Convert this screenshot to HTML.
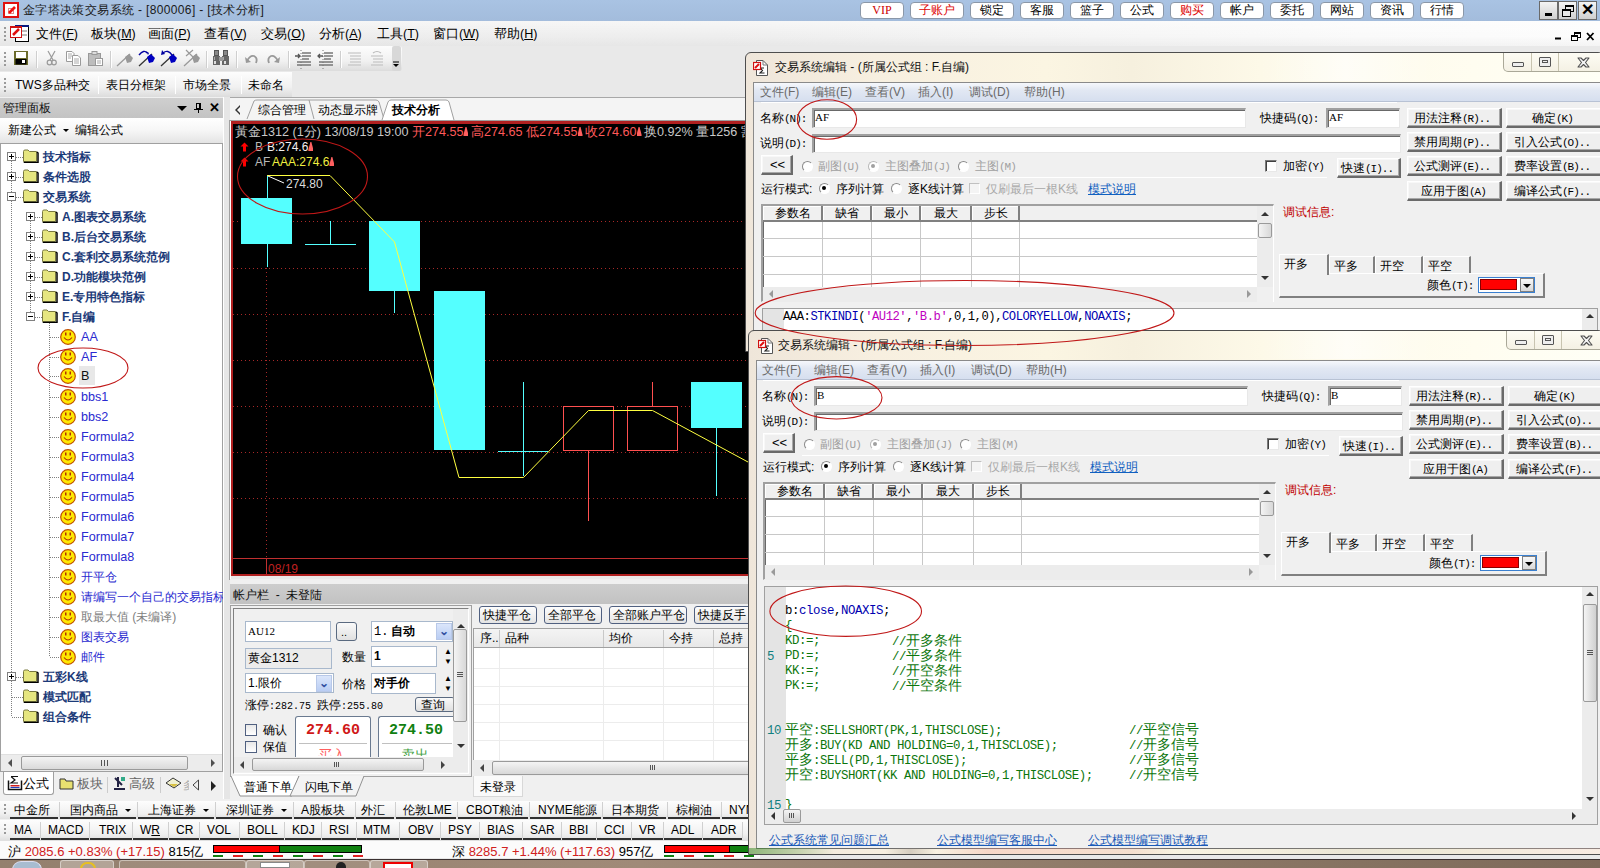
<!DOCTYPE html>
<html><head><meta charset="utf-8">
<style>
*{box-sizing:border-box}
body{margin:0;width:1600px;height:868px;overflow:hidden;position:relative;background:#e9e9e9;font-family:"Liberation Sans",sans-serif;font-size:12px;color:#000}
.a{position:absolute}
.t{position:absolute;white-space:nowrap;line-height:14px}
#title{left:0;top:0;width:1600px;height:21px;background:linear-gradient(#a9c3e3,#a3bcdc)}
.tb{position:absolute;top:2px;height:17px;background:#fff;border:1px solid #8a97a8;border-radius:4px;text-align:center;line-height:15px;font-size:12px}
.wc{position:absolute;top:1px;height:19px;width:19px;background:linear-gradient(#f4f4f4,#cfcfcf);border:1px solid #6a6a6a}
#menu{left:0;top:21px;width:1600px;height:25px;background:linear-gradient(rgba(255,255,255,.5),rgba(255,255,255,0) 60%,rgba(0,0,0,.03)),linear-gradient(90deg,#ededed,#eeeeee 45%,#fafafa 85%,#fcfcfc)}
.mi{position:absolute;top:5px;font-size:12.5px;white-space:nowrap}
#tool{left:0;top:46px;width:402px;height:25px;background:linear-gradient(#fdfdfd,#f1f1f1 60%,#dcdcdc);border-radius:0 3px 3px 0}
#tool2{left:0;top:72px;width:292px;height:25px;background:linear-gradient(#fdfdfd,#f1f1f1 60%,#dcdcdc)}
.grip{position:absolute;left:4px;top:6px;width:2px;height:14px;background:repeating-linear-gradient(#9a9a9a 0 2px,transparent 2px 4px)}
.sep{position:absolute;top:4px;width:1px;height:18px;background:#c8c8c8;border-right:1px solid #fff}
.bell{display:inline-block;width:5px;height:9px;margin-left:0;margin-right:-1px;vertical-align:0px;background:linear-gradient(#ff6060,#ff6060);clip-path:polygon(40% 0,60% 0,100% 85%,100% 100%,0 100%,0 85%)}
</style></head><body>

<!-- TITLE BAR -->
<div id="title" class="a">
  <svg class="a" style="left:3px;top:2px" width="17" height="17"><rect x="1" y="1" width="14" height="14" fill="#fff" stroke="#e01010" stroke-width="2"/><rect x="5.5" y="6.5" width="5" height="5" fill="none" stroke="#d01010" stroke-dasharray="1,1"/><path d="M6 11 L12 5" stroke="#f01010" stroke-width="2.6"/></svg>
  <div class="t" style="left:23px;top:3px;font-size:12px;letter-spacing:0.36px;color:#1a1a1a">金字塔决策交易系统 - [800006] - [技术分析]</div>
  <div class="tb" style="left:860px;width:44px;color:#c00;font-family:'Liberation Serif',serif;font-size:12px">VIP</div>
  <div class="tb" style="left:910px;width:54px;color:#d00">子账户</div>
  <div class="tb" style="left:970px;width:44px">锁定</div>
  <div class="tb" style="left:1020px;width:44px">客服</div>
  <div class="tb" style="left:1070px;width:44px">篮子</div>
  <div class="tb" style="left:1120px;width:44px">公式</div>
  <div class="tb" style="left:1170px;width:44px;color:#d00">购买</div>
  <div class="tb" style="left:1220px;width:44px">帐户</div>
  <div class="tb" style="left:1270px;width:44px">委托</div>
  <div class="tb" style="left:1320px;width:44px">网站</div>
  <div class="tb" style="left:1370px;width:44px">资讯</div>
  <div class="tb" style="left:1420px;width:44px">行情</div>
  <div class="wc" style="left:1539px"><div class="a" style="left:5px;top:11px;width:7px;height:3px;background:#000"></div></div>
  <div class="wc" style="left:1558px"><div class="a" style="left:6px;top:3px;width:9px;height:7px;border:2px solid #000;border-width:2px 1px 1px 1px"></div><div class="a" style="left:3px;top:7px;width:9px;height:8px;border:1px solid #000;border-top-width:2px;background:#e8e8e8"></div></div>
  <div class="wc" style="left:1578px;font-weight:bold;font-size:16px;line-height:16px;text-align:center">✕</div>
</div>

<!-- MENU -->
<div id="menu" class="a">
  <div class="grip" style="top:6px"></div>
  <svg class="a" style="left:10px;top:4px" width="20" height="18"><rect x="5.5" y="0.5" width="13" height="16" fill="#fff" stroke="#000"/><rect x="5" y="0" width="14" height="2" fill="#0a1a80"/><rect x="12" y="5" width="5" height="2" fill="#bbb"/><rect x="12" y="9" width="5" height="2" fill="#bbb"/><rect x="0.5" y="1.5" width="11" height="11" fill="#fff" stroke="#d01010"/><rect x="0" y="1" width="12" height="2" fill="#d01010"/><path d="M3 10 L9 4" stroke="#e01010" stroke-width="2.5"/></svg>
  <div class="mi" style="left:36px">文件(<u>F</u>)</div>
  <div class="mi" style="left:91px">板块(<u>M</u>)</div>
  <div class="mi" style="left:148px">画面(<u>P</u>)</div>
  <div class="mi" style="left:204px">查看(<u>V</u>)</div>
  <div class="mi" style="left:261px">交易(<u>O</u>)</div>
  <div class="mi" style="left:319px">分析(<u>A</u>)</div>
  <div class="mi" style="left:377px">工具(<u>T</u>)</div>
  <div class="mi" style="left:433px">窗口(<u>W</u>)</div>
  <div class="mi" style="left:494px">帮助(<u>H</u>)</div>
</div>

<!-- TOOLBAR -->
<div id="tool" class="a">
  <div class="grip"></div>
</div>
<div id="tool2" class="a">
  <div class="grip"></div>
  <div class="t" style="left:15px;top:6px;font-size:12px">TWS多品种交</div>
  <div class="sep" style="left:98px"></div>
  <div class="t" style="left:106px;top:6px;font-size:12px">表日分框架</div>
  <div class="sep" style="left:175px"></div>
  <div class="t" style="left:183px;top:6px;font-size:12px">市场全景</div>
  <div class="sep" style="left:241px"></div>
  <div class="t" style="left:248px;top:6px;font-size:12px">未命名</div>
</div>


<!-- TOOLBAR ICONS -->
<svg class="a" style="left:0;top:44px" width="405" height="30">
<rect x="14" y="7" width="14" height="14" fill="#6b6b2b"/><rect x="16" y="8" width="10" height="6" fill="#fff"/><rect x="15.5" y="15" width="11" height="5.5" fill="#000"/><rect x="22" y="16" width="3" height="3" fill="#fff"/>
<line x1="36.5" y1="7" x2="36.5" y2="24" stroke="#cfcfcf"/><line x1="37.5" y1="7" x2="37.5" y2="24" stroke="#fff"/>
<line x1="110.5" y1="7" x2="110.5" y2="24" stroke="#cfcfcf"/><line x1="111.5" y1="7" x2="111.5" y2="24" stroke="#fff"/>
<line x1="206.5" y1="7" x2="206.5" y2="24" stroke="#cfcfcf"/><line x1="207.5" y1="7" x2="207.5" y2="24" stroke="#fff"/>
<line x1="236.5" y1="7" x2="236.5" y2="24" stroke="#cfcfcf"/><line x1="237.5" y1="7" x2="237.5" y2="24" stroke="#fff"/>
<line x1="288.5" y1="7" x2="288.5" y2="24" stroke="#cfcfcf"/><line x1="289.5" y1="7" x2="289.5" y2="24" stroke="#fff"/>
<line x1="340.5" y1="7" x2="340.5" y2="24" stroke="#cfcfcf"/><line x1="341.5" y1="7" x2="341.5" y2="24" stroke="#fff"/>
<path d="M48 7 L53 16 M55 7 L50 16" stroke="#9a9a9a" stroke-width="1.2" fill="none"/><circle cx="49.5" cy="18.5" r="2.3" fill="none" stroke="#9a9a9a" stroke-width="1.2"/><circle cx="54" cy="18.5" r="2.3" fill="none" stroke="#9a9a9a" stroke-width="1.2"/>
<path d="M66.5 7.5 L72 7.5 L74 9.5 L74 17.5 L66.5 17.5 Z" fill="#fff" stroke="#9a9a9a"/><path d="M72.5 11.5 L78 11.5 L80.5 14 L80.5 21.5 L72.5 21.5 Z" fill="#fff" stroke="#9a9a9a"/><path d="M74 15 L79 15 M74 17 L79 17 M74 19 L79 19 M68 10 L72 10 M68 12 L72 12 M68 14 L71 14" stroke="#aaa"/>
<rect x="88.5" y="9.5" width="12" height="12" fill="#bdbdbd" stroke="#999"/><rect x="92" y="7.5" width="5" height="3" fill="#ddd" stroke="#999"/><rect x="95.5" y="14.5" width="7" height="7" fill="#fff" stroke="#999"/><path d="M97 17 L101 17 M97 19 L101 19" stroke="#aaa"/>
<path d="M117 22 L130 10" stroke="#999" stroke-width="1.3"/><path d="M125 13 L129 10 L133 14 L131 18 L127 19 Z" fill="#999"/>
<path d="M139 22 L152 10" stroke="#333" stroke-width="1.3"/><path d="M147 13 L151 10 L155 14 L153 18 L149 19 Z" fill="#0000c0"/><path d="M139 11 Q144 5 147 9" stroke="#0000a0" stroke-width="1.4" fill="none"/><path d="M146 7 L148 11 L149 9 Z" fill="#0000a0"/>
<path d="M161 22 L174 10" stroke="#333" stroke-width="1.3"/><path d="M169 13 L173 10 L177 14 L175 18 L171 19 Z" fill="#0000c0"/><path d="M163 9 Q168 5 172 11" stroke="#0000a0" stroke-width="1.4" fill="none"/><path d="M162 6 L161 11 L165 10 Z" fill="#0000a0"/>
<path d="M184 22 L197 10" stroke="#999" stroke-width="1.3"/><path d="M192 13 L196 10 L200 14 L198 18 L194 19 Z" fill="#999"/><path d="M186 6 L193 13 M193 6 L186 12" stroke="#999" stroke-width="1.2"/>
<rect x="214.5" y="6.5" width="4" height="5" fill="#888" stroke="#555"/><rect x="223.5" y="6.5" width="4" height="5" fill="#888" stroke="#555"/><path d="M213 12 L220 12 L220 21 L213 21 Z M222 12 L229 12 L229 21 L222 21 Z" fill="#666"/><rect x="219" y="13" width="4" height="4" fill="#999"/><rect x="214" y="17" width="2" height="3" fill="#ddd"/><rect x="224" y="17" width="2" height="3" fill="#ddd"/><rect x="214" y="13" width="1" height="3" fill="#aaa"/><rect x="223" y="13" width="1" height="3" fill="#aaa"/>
<path d="M247 17 Q250 11 254 12 Q258 14 256 19" stroke="#999" stroke-width="1.8" fill="none"/><path d="M245 13 L246 19 L251 18 Z" fill="#999"/>
<path d="M278 17 Q275 11 271 12 Q267 14 269 19" stroke="#999" stroke-width="1.8" fill="none"/><path d="M280 13 L279 19 L274 18 Z" fill="#999"/>
<path d="M302 9 L311 9 M302 12 L311 12 M302 15 L309 15 M297 18 L311 18 M297 21 L311 21" stroke="#777" stroke-width="1.6"/>
<path d="M301 6 L301 25" stroke="#777" stroke-dasharray="1,2"/>
<path d="M295 12 L300 12 M298 10 L300 12 L298 14" stroke="#555" stroke-width="1.3" fill="none"/>
<path d="M324 9 L333 9 M324 12 L333 12 M324 15 L331 15 M319 18 L333 18 M319 21 L333 21" stroke="#777" stroke-width="1.6"/>
<path d="M323 6 L323 25" stroke="#777" stroke-dasharray="1,2"/>
<path d="M318 12 L323 12 M320 10 L318 12 L320 14" stroke="#555" stroke-width="1.3" fill="none"/>
<path d="M348 9 L361 9 M350 12 L361 12 M350 15 L361 15 M350 18 L361 18 M348 21 L361 21" stroke="#bbb" stroke-width="1.2"/>
<path d="M373 9 Q377 6 381 9 M371 12 L383 12 M373 15 L383 15 M373 18 L383 18 M371 21 L383 21" stroke="#bbb" stroke-width="1.2" fill="none"/>
<rect x="392" y="2" width="9" height="25" rx="2" fill="#d8d8d8"/><path d="M393 18 L399 18" stroke="#000"/><path d="M393 20 L399 20 L396 23 Z" fill="#000"/>
</svg>
<svg class="a" style="left:1550px;top:28px" width="50" height="16"><rect x="5" y="9.5" width="6" height="2" fill="#000"/><rect x="24.5" y="4.5" width="6" height="5" fill="none" stroke="#000"/><rect x="24" y="4" width="7" height="2" fill="#000"/><rect x="21.5" y="7.5" width="6" height="5" fill="#fafafa" stroke="#000"/><rect x="21" y="7" width="7" height="2" fill="#000"/><path d="M37 5 L43.5 12 M43.5 5 L37 12" stroke="#000" stroke-width="1.8"/></svg>
<!-- LEFT PANEL -->
<div class="a" style="left:0;top:97px;width:225px;height:676px;background:#f0f0f0"></div>
<div class="a" style="left:0;top:98px;width:225px;height:20px;background:linear-gradient(#cfcfcf,#c3c3c3)"></div>
<div class="t" style="left:3px;top:101px;font-size:12px;color:#111">管理面板</div>
<div class="a" style="left:177px;top:106px;width:0;height:0;border-left:5px solid transparent;border-right:5px solid transparent;border-top:5px solid #000"></div>
<div class="a" style="left:196px;top:103px;width:5px;height:6px;border:1px solid #000;border-right-width:2px"></div><div class="a" style="left:194px;top:109px;width:9px;height:1px;background:#000"></div><div class="a" style="left:198px;top:110px;width:1px;height:3px;background:#000"></div>
<div class="t" style="left:209px;top:101px;font-size:13px;font-weight:bold">✕</div>
<div class="a" style="left:0;top:118px;width:225px;height:25px;background:linear-gradient(#ffffff,#f6f6f6 50%,#e4e4e4)"></div>
<div class="t" style="left:8px;top:123px;font-size:12px">新建公式</div>
<div class="a" style="left:63px;top:129px;border-left:3px solid transparent;border-right:3px solid transparent;border-top:3px solid #000"></div>
<div class="t" style="left:75px;top:123px;font-size:12px">编辑公式</div>
<div class="a" style="left:0;top:143px;width:223px;height:630px;background:#fff;border:1px solid #a0a0a0;border-bottom:none;overflow:hidden"></div>
<div class="a" style="left:11px;top:157px;width:1px;height:560px;background:repeating-linear-gradient(#808080 0 1px,transparent 1px 2px)"></div>
<div class="a" style="left:30px;top:217px;width:1px;height:100px;background:repeating-linear-gradient(#808080 0 1px,transparent 1px 2px)"></div>
<div class="a" style="left:49px;top:317px;width:1px;height:340px;background:repeating-linear-gradient(#808080 0 1px,transparent 1px 2px)"></div>
<div class="a" style="left:7px;top:152px;width:9px;height:9px;border:1px solid #808080;background:#fff"></div><div class="a" style="left:9px;top:156px;width:5px;height:1px;background:#000"></div><div class="a" style="left:11px;top:154px;width:1px;height:5px;background:#000"></div>
<div class="a" style="left:16px;top:157px;width:7px;height:1px;background:repeating-linear-gradient(90deg,#808080 0 1px,transparent 1px 2px)"></div>
<svg class="a" style="left:23px;top:149px" width="16" height="14" viewBox="0 0 16 14"><path d="M0.5 2.5 Q0.5 1 2 1 L5 1 L6.5 2.5 L13.5 2.5 L13.5 12.5 L0.5 12.5 Z" fill="#e6e680" stroke="#7a7a40" stroke-width="1"/><path d="M14 3 L15 4 L15 13.5 L1.5 13.5 L1 13" fill="none" stroke="#000" stroke-width="1.5"/></svg>
<div class="t" style="left:43px;top:150px;font-size:12px;font-weight:bold;color:#1b3a78">技术指标</div>
<div class="a" style="left:7px;top:172px;width:9px;height:9px;border:1px solid #808080;background:#fff"></div><div class="a" style="left:9px;top:176px;width:5px;height:1px;background:#000"></div><div class="a" style="left:11px;top:174px;width:1px;height:5px;background:#000"></div>
<div class="a" style="left:16px;top:177px;width:7px;height:1px;background:repeating-linear-gradient(90deg,#808080 0 1px,transparent 1px 2px)"></div>
<svg class="a" style="left:23px;top:169px" width="16" height="14" viewBox="0 0 16 14"><path d="M0.5 2.5 Q0.5 1 2 1 L5 1 L6.5 2.5 L13.5 2.5 L13.5 12.5 L0.5 12.5 Z" fill="#e6e680" stroke="#7a7a40" stroke-width="1"/><path d="M14 3 L15 4 L15 13.5 L1.5 13.5 L1 13" fill="none" stroke="#000" stroke-width="1.5"/></svg>
<div class="t" style="left:43px;top:170px;font-size:12px;font-weight:bold;color:#1b3a78">条件选股</div>
<div class="a" style="left:7px;top:192px;width:9px;height:9px;border:1px solid #808080;background:#fff"></div><div class="a" style="left:9px;top:196px;width:5px;height:1px;background:#000"></div>
<div class="a" style="left:16px;top:197px;width:7px;height:1px;background:repeating-linear-gradient(90deg,#808080 0 1px,transparent 1px 2px)"></div>
<svg class="a" style="left:23px;top:189px" width="16" height="14" viewBox="0 0 16 14"><path d="M0.5 2.5 Q0.5 1 2 1 L5 1 L6.5 2.5 L13.5 2.5 L13.5 12.5 L0.5 12.5 Z" fill="#e6e680" stroke="#7a7a40" stroke-width="1"/><path d="M14 3 L15 4 L15 13.5 L1.5 13.5 L1 13" fill="none" stroke="#000" stroke-width="1.5"/></svg>
<div class="t" style="left:43px;top:190px;font-size:12px;font-weight:bold;color:#1b3a78">交易系统</div>
<div class="a" style="left:7px;top:672px;width:9px;height:9px;border:1px solid #808080;background:#fff"></div><div class="a" style="left:9px;top:676px;width:5px;height:1px;background:#000"></div><div class="a" style="left:11px;top:674px;width:1px;height:5px;background:#000"></div>
<div class="a" style="left:16px;top:677px;width:7px;height:1px;background:repeating-linear-gradient(90deg,#808080 0 1px,transparent 1px 2px)"></div>
<svg class="a" style="left:23px;top:669px" width="16" height="14" viewBox="0 0 16 14"><path d="M0.5 2.5 Q0.5 1 2 1 L5 1 L6.5 2.5 L13.5 2.5 L13.5 12.5 L0.5 12.5 Z" fill="#e6e680" stroke="#7a7a40" stroke-width="1"/><path d="M14 3 L15 4 L15 13.5 L1.5 13.5 L1 13" fill="none" stroke="#000" stroke-width="1.5"/></svg>
<div class="t" style="left:43px;top:670px;font-size:12px;font-weight:bold;color:#1b3a78">五彩K线</div>
<div class="a" style="left:12px;top:697px;width:11px;height:1px;background:repeating-linear-gradient(90deg,#808080 0 1px,transparent 1px 2px)"></div>
<svg class="a" style="left:23px;top:689px" width="16" height="14" viewBox="0 0 16 14"><path d="M0.5 2.5 Q0.5 1 2 1 L5 1 L6.5 2.5 L13.5 2.5 L13.5 12.5 L0.5 12.5 Z" fill="#e6e680" stroke="#7a7a40" stroke-width="1"/><path d="M14 3 L15 4 L15 13.5 L1.5 13.5 L1 13" fill="none" stroke="#000" stroke-width="1.5"/></svg>
<div class="t" style="left:43px;top:690px;font-size:12px;font-weight:bold;color:#1b3a78">模式匹配</div>
<div class="a" style="left:12px;top:717px;width:11px;height:1px;background:repeating-linear-gradient(90deg,#808080 0 1px,transparent 1px 2px)"></div>
<svg class="a" style="left:23px;top:709px" width="16" height="14" viewBox="0 0 16 14"><path d="M0.5 2.5 Q0.5 1 2 1 L5 1 L6.5 2.5 L13.5 2.5 L13.5 12.5 L0.5 12.5 Z" fill="#e6e680" stroke="#7a7a40" stroke-width="1"/><path d="M14 3 L15 4 L15 13.5 L1.5 13.5 L1 13" fill="none" stroke="#000" stroke-width="1.5"/></svg>
<div class="t" style="left:43px;top:710px;font-size:12px;font-weight:bold;color:#1b3a78">组合条件</div>
<div class="a" style="left:26px;top:212px;width:9px;height:9px;border:1px solid #808080;background:#fff"></div><div class="a" style="left:28px;top:216px;width:5px;height:1px;background:#000"></div><div class="a" style="left:30px;top:214px;width:1px;height:5px;background:#000"></div>
<div class="a" style="left:35px;top:217px;width:7px;height:1px;background:repeating-linear-gradient(90deg,#808080 0 1px,transparent 1px 2px)"></div>
<svg class="a" style="left:42px;top:209px" width="16" height="14" viewBox="0 0 16 14"><path d="M0.5 2.5 Q0.5 1 2 1 L5 1 L6.5 2.5 L13.5 2.5 L13.5 12.5 L0.5 12.5 Z" fill="#e6e680" stroke="#7a7a40" stroke-width="1"/><path d="M14 3 L15 4 L15 13.5 L1.5 13.5 L1 13" fill="none" stroke="#000" stroke-width="1.5"/></svg>
<div class="t" style="left:62px;top:210px;font-size:12px;font-weight:bold;color:#1b3a78">A.图表交易系统</div>
<div class="a" style="left:26px;top:232px;width:9px;height:9px;border:1px solid #808080;background:#fff"></div><div class="a" style="left:28px;top:236px;width:5px;height:1px;background:#000"></div><div class="a" style="left:30px;top:234px;width:1px;height:5px;background:#000"></div>
<div class="a" style="left:35px;top:237px;width:7px;height:1px;background:repeating-linear-gradient(90deg,#808080 0 1px,transparent 1px 2px)"></div>
<svg class="a" style="left:42px;top:229px" width="16" height="14" viewBox="0 0 16 14"><path d="M0.5 2.5 Q0.5 1 2 1 L5 1 L6.5 2.5 L13.5 2.5 L13.5 12.5 L0.5 12.5 Z" fill="#e6e680" stroke="#7a7a40" stroke-width="1"/><path d="M14 3 L15 4 L15 13.5 L1.5 13.5 L1 13" fill="none" stroke="#000" stroke-width="1.5"/></svg>
<div class="t" style="left:62px;top:230px;font-size:12px;font-weight:bold;color:#1b3a78">B.后台交易系统</div>
<div class="a" style="left:26px;top:252px;width:9px;height:9px;border:1px solid #808080;background:#fff"></div><div class="a" style="left:28px;top:256px;width:5px;height:1px;background:#000"></div><div class="a" style="left:30px;top:254px;width:1px;height:5px;background:#000"></div>
<div class="a" style="left:35px;top:257px;width:7px;height:1px;background:repeating-linear-gradient(90deg,#808080 0 1px,transparent 1px 2px)"></div>
<svg class="a" style="left:42px;top:249px" width="16" height="14" viewBox="0 0 16 14"><path d="M0.5 2.5 Q0.5 1 2 1 L5 1 L6.5 2.5 L13.5 2.5 L13.5 12.5 L0.5 12.5 Z" fill="#e6e680" stroke="#7a7a40" stroke-width="1"/><path d="M14 3 L15 4 L15 13.5 L1.5 13.5 L1 13" fill="none" stroke="#000" stroke-width="1.5"/></svg>
<div class="t" style="left:62px;top:250px;font-size:12px;font-weight:bold;color:#1b3a78">C.套利交易系统范例</div>
<div class="a" style="left:26px;top:272px;width:9px;height:9px;border:1px solid #808080;background:#fff"></div><div class="a" style="left:28px;top:276px;width:5px;height:1px;background:#000"></div><div class="a" style="left:30px;top:274px;width:1px;height:5px;background:#000"></div>
<div class="a" style="left:35px;top:277px;width:7px;height:1px;background:repeating-linear-gradient(90deg,#808080 0 1px,transparent 1px 2px)"></div>
<svg class="a" style="left:42px;top:269px" width="16" height="14" viewBox="0 0 16 14"><path d="M0.5 2.5 Q0.5 1 2 1 L5 1 L6.5 2.5 L13.5 2.5 L13.5 12.5 L0.5 12.5 Z" fill="#e6e680" stroke="#7a7a40" stroke-width="1"/><path d="M14 3 L15 4 L15 13.5 L1.5 13.5 L1 13" fill="none" stroke="#000" stroke-width="1.5"/></svg>
<div class="t" style="left:62px;top:270px;font-size:12px;font-weight:bold;color:#1b3a78">D.功能模块范例</div>
<div class="a" style="left:26px;top:292px;width:9px;height:9px;border:1px solid #808080;background:#fff"></div><div class="a" style="left:28px;top:296px;width:5px;height:1px;background:#000"></div><div class="a" style="left:30px;top:294px;width:1px;height:5px;background:#000"></div>
<div class="a" style="left:35px;top:297px;width:7px;height:1px;background:repeating-linear-gradient(90deg,#808080 0 1px,transparent 1px 2px)"></div>
<svg class="a" style="left:42px;top:289px" width="16" height="14" viewBox="0 0 16 14"><path d="M0.5 2.5 Q0.5 1 2 1 L5 1 L6.5 2.5 L13.5 2.5 L13.5 12.5 L0.5 12.5 Z" fill="#e6e680" stroke="#7a7a40" stroke-width="1"/><path d="M14 3 L15 4 L15 13.5 L1.5 13.5 L1 13" fill="none" stroke="#000" stroke-width="1.5"/></svg>
<div class="t" style="left:62px;top:290px;font-size:12px;font-weight:bold;color:#1b3a78">E.专用特色指标</div>
<div class="a" style="left:26px;top:312px;width:9px;height:9px;border:1px solid #808080;background:#fff"></div><div class="a" style="left:28px;top:316px;width:5px;height:1px;background:#000"></div>
<div class="a" style="left:35px;top:317px;width:7px;height:1px;background:repeating-linear-gradient(90deg,#808080 0 1px,transparent 1px 2px)"></div>
<svg class="a" style="left:42px;top:309px" width="16" height="14" viewBox="0 0 16 14"><path d="M0.5 2.5 Q0.5 1 2 1 L5 1 L6.5 2.5 L13.5 2.5 L13.5 12.5 L0.5 12.5 Z" fill="#e6e680" stroke="#7a7a40" stroke-width="1"/><path d="M14 3 L15 4 L15 13.5 L1.5 13.5 L1 13" fill="none" stroke="#000" stroke-width="1.5"/></svg>
<div class="t" style="left:62px;top:310px;font-size:12px;font-weight:bold;color:#1b3a78">F.自编</div>
<div class="a" style="left:50px;top:337px;width:10px;height:1px;background:repeating-linear-gradient(90deg,#808080 0 1px,transparent 1px 2px)"></div>
<svg class="a" style="left:60px;top:329px" width="16" height="16" viewBox="0 0 16 16"><circle cx="8" cy="8" r="7.3" fill="#ffe800" stroke="#c05000" stroke-width="1.2"/><rect x="5" y="3.5" width="1.5" height="3" fill="#b03000"/><rect x="9.5" y="3.5" width="1.5" height="3" fill="#b03000"/><path d="M4 8.5 Q8 13.5 12 8.5" fill="none" stroke="#b03000" stroke-width="1.2"/></svg>
<div class="t" style="left:81px;top:330px;font-size:12.6px;color:#2a2ad0">AA</div>
<div class="a" style="left:50px;top:357px;width:10px;height:1px;background:repeating-linear-gradient(90deg,#808080 0 1px,transparent 1px 2px)"></div>
<svg class="a" style="left:60px;top:349px" width="16" height="16" viewBox="0 0 16 16"><circle cx="8" cy="8" r="7.3" fill="#ffe800" stroke="#c05000" stroke-width="1.2"/><rect x="5" y="3.5" width="1.5" height="3" fill="#b03000"/><rect x="9.5" y="3.5" width="1.5" height="3" fill="#b03000"/><path d="M4 8.5 Q8 13.5 12 8.5" fill="none" stroke="#b03000" stroke-width="1.2"/></svg>
<div class="t" style="left:81px;top:350px;font-size:12.6px;color:#2a2ad0">AF</div>
<div class="a" style="left:50px;top:376px;width:10px;height:1px;background:repeating-linear-gradient(90deg,#808080 0 1px,transparent 1px 2px)"></div>
<svg class="a" style="left:60px;top:368px" width="16" height="16" viewBox="0 0 16 16"><circle cx="8" cy="8" r="7.3" fill="#ffe800" stroke="#c05000" stroke-width="1.2"/><rect x="5" y="3.5" width="1.5" height="3" fill="#b03000"/><rect x="9.5" y="3.5" width="1.5" height="3" fill="#b03000"/><path d="M4 8.5 Q8 13.5 12 8.5" fill="none" stroke="#b03000" stroke-width="1.2"/></svg>
<div class="a" style="left:79px;top:366px;width:16px;height:19px;background:#e8e8e8"></div>
<div class="t" style="left:81px;top:369px;font-size:12.6px;color:#111">B</div>
<div class="a" style="left:50px;top:397px;width:10px;height:1px;background:repeating-linear-gradient(90deg,#808080 0 1px,transparent 1px 2px)"></div>
<svg class="a" style="left:60px;top:389px" width="16" height="16" viewBox="0 0 16 16"><circle cx="8" cy="8" r="7.3" fill="#ffe800" stroke="#c05000" stroke-width="1.2"/><rect x="5" y="3.5" width="1.5" height="3" fill="#b03000"/><rect x="9.5" y="3.5" width="1.5" height="3" fill="#b03000"/><path d="M4 8.5 Q8 13.5 12 8.5" fill="none" stroke="#b03000" stroke-width="1.2"/></svg>
<div class="t" style="left:81px;top:390px;font-size:12.6px;color:#2a2ad0">bbs1</div>
<div class="a" style="left:50px;top:417px;width:10px;height:1px;background:repeating-linear-gradient(90deg,#808080 0 1px,transparent 1px 2px)"></div>
<svg class="a" style="left:60px;top:409px" width="16" height="16" viewBox="0 0 16 16"><circle cx="8" cy="8" r="7.3" fill="#ffe800" stroke="#c05000" stroke-width="1.2"/><rect x="5" y="3.5" width="1.5" height="3" fill="#b03000"/><rect x="9.5" y="3.5" width="1.5" height="3" fill="#b03000"/><path d="M4 8.5 Q8 13.5 12 8.5" fill="none" stroke="#b03000" stroke-width="1.2"/></svg>
<div class="t" style="left:81px;top:410px;font-size:12.6px;color:#2a2ad0">bbs2</div>
<div class="a" style="left:50px;top:437px;width:10px;height:1px;background:repeating-linear-gradient(90deg,#808080 0 1px,transparent 1px 2px)"></div>
<svg class="a" style="left:60px;top:429px" width="16" height="16" viewBox="0 0 16 16"><circle cx="8" cy="8" r="7.3" fill="#ffe800" stroke="#c05000" stroke-width="1.2"/><rect x="5" y="3.5" width="1.5" height="3" fill="#b03000"/><rect x="9.5" y="3.5" width="1.5" height="3" fill="#b03000"/><path d="M4 8.5 Q8 13.5 12 8.5" fill="none" stroke="#b03000" stroke-width="1.2"/></svg>
<div class="t" style="left:81px;top:430px;font-size:12.6px;color:#2a2ad0">Formula2</div>
<div class="a" style="left:50px;top:457px;width:10px;height:1px;background:repeating-linear-gradient(90deg,#808080 0 1px,transparent 1px 2px)"></div>
<svg class="a" style="left:60px;top:449px" width="16" height="16" viewBox="0 0 16 16"><circle cx="8" cy="8" r="7.3" fill="#ffe800" stroke="#c05000" stroke-width="1.2"/><rect x="5" y="3.5" width="1.5" height="3" fill="#b03000"/><rect x="9.5" y="3.5" width="1.5" height="3" fill="#b03000"/><path d="M4 8.5 Q8 13.5 12 8.5" fill="none" stroke="#b03000" stroke-width="1.2"/></svg>
<div class="t" style="left:81px;top:450px;font-size:12.6px;color:#2a2ad0">Formula3</div>
<div class="a" style="left:50px;top:477px;width:10px;height:1px;background:repeating-linear-gradient(90deg,#808080 0 1px,transparent 1px 2px)"></div>
<svg class="a" style="left:60px;top:469px" width="16" height="16" viewBox="0 0 16 16"><circle cx="8" cy="8" r="7.3" fill="#ffe800" stroke="#c05000" stroke-width="1.2"/><rect x="5" y="3.5" width="1.5" height="3" fill="#b03000"/><rect x="9.5" y="3.5" width="1.5" height="3" fill="#b03000"/><path d="M4 8.5 Q8 13.5 12 8.5" fill="none" stroke="#b03000" stroke-width="1.2"/></svg>
<div class="t" style="left:81px;top:470px;font-size:12.6px;color:#2a2ad0">Formula4</div>
<div class="a" style="left:50px;top:497px;width:10px;height:1px;background:repeating-linear-gradient(90deg,#808080 0 1px,transparent 1px 2px)"></div>
<svg class="a" style="left:60px;top:489px" width="16" height="16" viewBox="0 0 16 16"><circle cx="8" cy="8" r="7.3" fill="#ffe800" stroke="#c05000" stroke-width="1.2"/><rect x="5" y="3.5" width="1.5" height="3" fill="#b03000"/><rect x="9.5" y="3.5" width="1.5" height="3" fill="#b03000"/><path d="M4 8.5 Q8 13.5 12 8.5" fill="none" stroke="#b03000" stroke-width="1.2"/></svg>
<div class="t" style="left:81px;top:490px;font-size:12.6px;color:#2a2ad0">Formula5</div>
<div class="a" style="left:50px;top:517px;width:10px;height:1px;background:repeating-linear-gradient(90deg,#808080 0 1px,transparent 1px 2px)"></div>
<svg class="a" style="left:60px;top:509px" width="16" height="16" viewBox="0 0 16 16"><circle cx="8" cy="8" r="7.3" fill="#ffe800" stroke="#c05000" stroke-width="1.2"/><rect x="5" y="3.5" width="1.5" height="3" fill="#b03000"/><rect x="9.5" y="3.5" width="1.5" height="3" fill="#b03000"/><path d="M4 8.5 Q8 13.5 12 8.5" fill="none" stroke="#b03000" stroke-width="1.2"/></svg>
<div class="t" style="left:81px;top:510px;font-size:12.6px;color:#2a2ad0">Formula6</div>
<div class="a" style="left:50px;top:537px;width:10px;height:1px;background:repeating-linear-gradient(90deg,#808080 0 1px,transparent 1px 2px)"></div>
<svg class="a" style="left:60px;top:529px" width="16" height="16" viewBox="0 0 16 16"><circle cx="8" cy="8" r="7.3" fill="#ffe800" stroke="#c05000" stroke-width="1.2"/><rect x="5" y="3.5" width="1.5" height="3" fill="#b03000"/><rect x="9.5" y="3.5" width="1.5" height="3" fill="#b03000"/><path d="M4 8.5 Q8 13.5 12 8.5" fill="none" stroke="#b03000" stroke-width="1.2"/></svg>
<div class="t" style="left:81px;top:530px;font-size:12.6px;color:#2a2ad0">Formula7</div>
<div class="a" style="left:50px;top:557px;width:10px;height:1px;background:repeating-linear-gradient(90deg,#808080 0 1px,transparent 1px 2px)"></div>
<svg class="a" style="left:60px;top:549px" width="16" height="16" viewBox="0 0 16 16"><circle cx="8" cy="8" r="7.3" fill="#ffe800" stroke="#c05000" stroke-width="1.2"/><rect x="5" y="3.5" width="1.5" height="3" fill="#b03000"/><rect x="9.5" y="3.5" width="1.5" height="3" fill="#b03000"/><path d="M4 8.5 Q8 13.5 12 8.5" fill="none" stroke="#b03000" stroke-width="1.2"/></svg>
<div class="t" style="left:81px;top:550px;font-size:12.6px;color:#2a2ad0">Formula8</div>
<div class="a" style="left:50px;top:577px;width:10px;height:1px;background:repeating-linear-gradient(90deg,#808080 0 1px,transparent 1px 2px)"></div>
<svg class="a" style="left:60px;top:569px" width="16" height="16" viewBox="0 0 16 16"><circle cx="8" cy="8" r="7.3" fill="#ffe800" stroke="#c05000" stroke-width="1.2"/><rect x="5" y="3.5" width="1.5" height="3" fill="#b03000"/><rect x="9.5" y="3.5" width="1.5" height="3" fill="#b03000"/><path d="M4 8.5 Q8 13.5 12 8.5" fill="none" stroke="#b03000" stroke-width="1.2"/></svg>
<div class="t" style="left:81px;top:570px;font-size:12px;color:#2a2ad0">开平仓</div>
<div class="a" style="left:50px;top:597px;width:10px;height:1px;background:repeating-linear-gradient(90deg,#808080 0 1px,transparent 1px 2px)"></div>
<svg class="a" style="left:60px;top:589px" width="16" height="16" viewBox="0 0 16 16"><circle cx="8" cy="8" r="7.3" fill="#ffe800" stroke="#c05000" stroke-width="1.2"/><rect x="5" y="3.5" width="1.5" height="3" fill="#b03000"/><rect x="9.5" y="3.5" width="1.5" height="3" fill="#b03000"/><path d="M4 8.5 Q8 13.5 12 8.5" fill="none" stroke="#b03000" stroke-width="1.2"/></svg>
<div class="t" style="left:81px;top:590px;font-size:12px;color:#2a2ad0">请编写一个自己的交易指标</div>
<div class="a" style="left:50px;top:617px;width:10px;height:1px;background:repeating-linear-gradient(90deg,#808080 0 1px,transparent 1px 2px)"></div>
<svg class="a" style="left:60px;top:609px" width="16" height="16" viewBox="0 0 16 16"><circle cx="8" cy="8" r="7.3" fill="#ffe800" stroke="#c05000" stroke-width="1.2"/><rect x="5" y="3.5" width="1.5" height="3" fill="#b03000"/><rect x="9.5" y="3.5" width="1.5" height="3" fill="#b03000"/><path d="M4 8.5 Q8 13.5 12 8.5" fill="none" stroke="#b03000" stroke-width="1.2"/></svg>
<div class="t" style="left:81px;top:610px;font-size:12px;color:#808080">取最大值 (未编译)</div>
<div class="a" style="left:50px;top:637px;width:10px;height:1px;background:repeating-linear-gradient(90deg,#808080 0 1px,transparent 1px 2px)"></div>
<svg class="a" style="left:60px;top:629px" width="16" height="16" viewBox="0 0 16 16"><circle cx="8" cy="8" r="7.3" fill="#ffe800" stroke="#c05000" stroke-width="1.2"/><rect x="5" y="3.5" width="1.5" height="3" fill="#b03000"/><rect x="9.5" y="3.5" width="1.5" height="3" fill="#b03000"/><path d="M4 8.5 Q8 13.5 12 8.5" fill="none" stroke="#b03000" stroke-width="1.2"/></svg>
<div class="t" style="left:81px;top:630px;font-size:12px;color:#2a2ad0">图表交易</div>
<div class="a" style="left:50px;top:657px;width:10px;height:1px;background:repeating-linear-gradient(90deg,#808080 0 1px,transparent 1px 2px)"></div>
<svg class="a" style="left:60px;top:649px" width="16" height="16" viewBox="0 0 16 16"><circle cx="8" cy="8" r="7.3" fill="#ffe800" stroke="#c05000" stroke-width="1.2"/><rect x="5" y="3.5" width="1.5" height="3" fill="#b03000"/><rect x="9.5" y="3.5" width="1.5" height="3" fill="#b03000"/><path d="M4 8.5 Q8 13.5 12 8.5" fill="none" stroke="#b03000" stroke-width="1.2"/></svg>
<div class="t" style="left:81px;top:650px;font-size:12px;color:#2a2ad0">邮件</div>
<div class="a" style="left:1px;top:754px;width:221px;height:17px;background:#ececec;border-top:1px solid #e0e0e0"></div>
<div class="a" style="left:8px;top:759px;border-top:4px solid transparent;border-bottom:4px solid transparent;border-right:4px solid #505050"></div>
<div class="a" style="left:211px;top:759px;border-top:4px solid transparent;border-bottom:4px solid transparent;border-left:4px solid #505050"></div>
<div class="a" style="left:21px;top:756px;width:167px;height:14px;border:1px solid #9a9a9a;border-radius:2px;background:linear-gradient(#f4f4f4,#dadada)"></div>
<div class="a" style="left:101px;top:760px;width:7px;height:6px;background:repeating-linear-gradient(90deg,#555 0 1px,transparent 1px 3px)"></div>
<div class="a" style="left:0;top:771px;width:226px;height:1px;background:#a0a0a0"></div>
<div class="a" style="left:0;top:772px;width:225px;height:27px;background:#f0f0f0"></div>
<div class="a" style="left:3px;top:772px;width:51px;height:23px;background:#fff;border:1px solid #a0a0a0;border-top:none;border-radius:0 0 3px 3px"></div>
<svg class="a" style="left:7px;top:775px" width="16" height="16"><path d="M1.5 5.5 L1.5 14.5 L14.5 14.5 L14.5 5.5" fill="none" stroke="#111" stroke-width="1.5"/><path d="M4 1.5 L11 1.5 M4 1.5 L8 5 L4 8 L11 8" fill="none" stroke="#111" stroke-width="1.2"/><rect x="3.5" y="10" width="9" height="1.5" fill="#d02020"/><rect x="3.5" y="12" width="9" height="1" fill="#2040c0"/></svg>
<div class="t" style="left:23px;top:777px;font-size:13px">公式</div>
<svg class="a" style="left:59px;top:776px" width="16" height="14"><path d="M1 3 L6 3 L7 5 L14 5 L14 13 L1 13 Z" fill="#e8e070" stroke="#333"/></svg>
<div class="t" style="left:77px;top:777px;font-size:13px;color:#666">板块</div>
<div class="a" style="left:107px;top:777px;width:1px;height:16px;background:#ccc"></div>
<svg class="a" style="left:112px;top:775px" width="15" height="16"><path d="M2 14 L13 14 M3 3 L10 10 M6 2 L6 12" stroke="#224" stroke-width="2"/><rect x="9" y="2" width="4" height="4" fill="#3a8"/></svg>
<div class="t" style="left:129px;top:777px;font-size:13px;color:#666">高级</div>
<div class="a" style="left:160px;top:777px;width:1px;height:16px;background:#ccc"></div>
<svg class="a" style="left:165px;top:777px" width="17" height="13"><path d="M1 6 L8 1 L16 6 L9 11 Z" fill="#f0f0d0" stroke="#333"/><path d="M4 7 L9 10 L13 7" fill="#d8c040"/></svg>
<div class="t" style="left:183px;top:778px;font-size:11px;color:#aaa;width:6px;overflow:hidden">多</div>
<svg class="a" style="left:192px;top:779px" width="8" height="12"><path d="M6.5 1 L1 6 L6.5 11 Z" fill="none" stroke="#444"/></svg>
<div class="a" style="left:211px;top:781px;border-top:5px solid transparent;border-bottom:5px solid transparent;border-left:5px solid #222"></div>
<div class="a" style="left:223px;top:97px;width:7px;height:703px;background:#e6e6e6;border-left:1px solid #fff"></div>
<!-- CHART -->
<div class="a" style="left:230px;top:97px;width:520px;height:24px;background:#f4f4f4;border-top:1px solid #a8a8a8"></div>
<div class="a" style="left:235px;top:105px;border-top:5px solid transparent;border-bottom:5px solid transparent;border-right:5px solid #333"></div><div class="a" style="left:237px;top:107px;border-top:3px solid transparent;border-bottom:3px solid transparent;border-right:3px solid #fafafa"></div>
<svg class="a" style="left:240px;top:98px" width="220" height="23"><path d="M7 21 L14 3 Q15 2 17 2 L69 2 L74 21" fill="none" stroke="#a0a0a0"/><path d="M69 2 L136 2 Q138 2 139 4 L144 21" fill="none" stroke="#a0a0a0"/><path d="M142 22 L148 4 Q149 2 151 2 L206 2 Q208 2 209 4 L214 22" fill="#fff" stroke="#a0a0a0"/></svg>
<div class="t" style="left:258px;top:103px;font-size:12px">综合管理</div>
<div class="t" style="left:318px;top:103px;font-size:12px">动态显示牌</div>
<div class="t" style="left:392px;top:103px;font-size:12px;font-weight:bold">技术分析</div>
<div class="a" style="left:229px;top:120px;width:521px;height:460px;border:1px solid #a0a0a0;border-right:none;box-shadow:inset 1px 1px 0 #fff"></div><div class="a" style="left:231px;top:121px;width:517px;height:455px;background:#000;border:2px solid #b02020;border-right:none;border-top-width:3px"></div>
<svg class="a" style="left:0;top:0" width="750" height="580">
<line x1="233" y1="221.5" x2="748" y2="221.5" stroke="#a82828" stroke-width="1" stroke-dasharray="1,3"/>
<line x1="233" y1="268.5" x2="748" y2="268.5" stroke="#a82828" stroke-width="1" stroke-dasharray="1,3"/>
<line x1="233" y1="314.5" x2="748" y2="314.5" stroke="#a82828" stroke-width="1" stroke-dasharray="1,3"/>
<line x1="233" y1="360.5" x2="748" y2="360.5" stroke="#a82828" stroke-width="1" stroke-dasharray="1,3"/>
<line x1="233" y1="406.5" x2="748" y2="406.5" stroke="#a82828" stroke-width="1" stroke-dasharray="1,3"/>
<line x1="233" y1="452.5" x2="748" y2="452.5" stroke="#a82828" stroke-width="1" stroke-dasharray="1,3"/>
<line x1="233" y1="498.5" x2="748" y2="498.5" stroke="#a82828" stroke-width="1" stroke-dasharray="1,3"/>
<line x1="266.5" y1="268" x2="266.5" y2="558" stroke="#a82828" stroke-dasharray="1,3"/>
<line x1="233" y1="558.5" x2="748" y2="558.5" stroke="#c03030"/>
<line x1="266.5" y1="558" x2="266.5" y2="574" stroke="#c03030"/>
<line x1="267.5" y1="175" x2="267.5" y2="267" stroke="#54ffff"/>
<rect x="241" y="198" width="51" height="46" fill="#54ffff"/>
<line x1="305" y1="244.5" x2="356" y2="244.5" stroke="#54ffff"/>
<line x1="330.5" y1="221" x2="330.5" y2="244" stroke="#54ffff"/>
<line x1="394.5" y1="221" x2="394.5" y2="313" stroke="#54ffff"/>
<rect x="369" y="221" width="51" height="70" fill="#54ffff"/>
<rect x="434" y="291" width="51" height="159" fill="#54ffff"/>
<line x1="523.5" y1="382" x2="523.5" y2="476" stroke="#54ffff"/>
<line x1="498" y1="451.5" x2="548" y2="451.5" stroke="#54ffff"/>
<line x1="588.5" y1="450" x2="588.5" y2="521" stroke="#ff5050"/>
<rect x="563.5" y="406.5" width="50" height="44" fill="#000" stroke="#ff5050"/>
<line x1="652.5" y1="382" x2="652.5" y2="406" stroke="#ff5050"/>
<rect x="627.5" y="406.5" width="50" height="44" fill="#000" stroke="#ff5050"/>
<line x1="716.5" y1="428" x2="716.5" y2="496" stroke="#54ffff"/>
<rect x="691" y="382" width="51" height="46" fill="#54ffff"/>
<polyline points="267,175.5 330,175.5 394.5,242 459,477.5 523.5,477.5 588.5,410.5 652.5,410.5 748,462" fill="none" stroke="#ffff40" stroke-width="1"/>
<line x1="268" y1="176" x2="284" y2="183" stroke="#fff"/>
</svg>
<div class="t" style="left:235px;top:125px;font-size:12.6px;color:#c8c8c8">黃金1312 (1分) 13/08/19 19:00 <span style="color:#ff5a5a">开274.55<i class="bell"></i> 高274.65 低274.55<i class="bell"></i> 收274.60<i class="bell"></i></span> 换0.92% 量1256 割</div>
<svg class="a" style="left:240px;top:142px" width="10" height="26"><path d="M4.5 0.5 L8.5 4.5 L6 4.5 L6 9.5 L3 9.5 L3 4.5 L0.5 4.5 Z" fill="#f00"/><path d="M4.5 15.5 L8.5 19.5 L6 19.5 L6 24.5 L3 24.5 L3 19.5 L0.5 19.5 Z" fill="#f00"/></svg>
<div class="t" style="left:255px;top:140px;font-size:12px;color:#b8b8b8">B</div><div class="t" style="left:267px;top:140px;font-size:12px;color:#f0f0f0">B:274.6<i class="bell"></i></div>
<div class="t" style="left:255px;top:155px;font-size:12px;color:#b8b8b8">AF</div><div class="t" style="left:272px;top:155px;font-size:12px;color:#f0f040">AAA:274.6<i class="bell"></i></div>
<div class="t" style="left:286px;top:177px;font-size:12px;color:#ddd">274.80</div>
<div class="t" style="left:268px;top:562px;font-size:12px;color:#c02020">08/19</div>
<!-- ACCOUNT -->
<div class="a" style="left:230px;top:579px;width:520px;height:221px;background:#f0f0f0"></div>
<div class="a" style="left:230px;top:584px;width:518px;height:20px;background:linear-gradient(#cdcdcd,#c2c2c2)"></div>
<div class="t" style="left:233px;top:588px;font-size:12px;color:#111">帐户栏 &nbsp;- &nbsp;未登陆</div>
<div class="a" style="left:230px;top:605px;width:242px;height:172px;border:1px solid #a0a0a0;background:#f0f0f0"></div>
<div class="a" style="left:233px;top:608px;width:236px;height:166px;border:1px solid #808080;border-right-color:#fff;border-bottom-color:#fff;background:#f0f0f0"></div>
<div class="a" style="left:245px;top:621px;width:86px;height:21px;border:1px solid #a8b8cc;background:#fff"></div><div class="t" style="left:248px;top:624px;font-size:12px;font-family:'Liberation Serif',serif;font-size:11px">AU12</div>
<div class="a" style="left:336px;top:622px;width:21px;height:19px;border:1px solid #5a6a80;border-radius:3px;background:linear-gradient(#fafafa,#e0e0e0)"></div><div class="t" style="left:341px;top:625px;font-size:11px">..</div>
<div class="a" style="left:371px;top:621px;width:82px;height:21px;border:1px solid #a8b8cc;background:#fff"></div><div class="t" style="left:374px;top:624px;font-size:12px;font-family:'Liberation Mono',monospace;font-size:12px">1.<b style="font-family:Liberation Sans,sans-serif;margin-left:3px">自动</b></div>
<div class="a" style="left:436px;top:623px;width:16px;height:17px;background:linear-gradient(#dbe6fb,#b9cdf3);border:1px solid #b8c8e8"></div><div class="t" style="left:439px;top:624px;font-size:12px;color:#3050a0;font-weight:bold">⌄</div>
<div class="a" style="left:245px;top:648px;width:87px;height:21px;border:1px solid #a8b8cc;background:#ececec"></div><div class="t" style="left:248px;top:651px;font-size:12px;">黄金1312</div>
<div class="t" style="left:342px;top:650px;font-size:12px">数量</div>
<div class="a" style="left:371px;top:646px;width:66px;height:21px;border:1px solid #a8b8cc;background:#fff"></div><div class="t" style="left:374px;top:649px;font-size:12px;"><b>1</b></div>
<div class="t" style="left:444px;top:645px;font-size:8px">▲</div><div class="t" style="left:444px;top:655px;font-size:8px">▼</div>
<div class="a" style="left:245px;top:673px;width:89px;height:20px;border:1px solid #a8b8cc;background:#fff"></div><div class="t" style="left:248px;top:676px;font-size:12px;font-size:12px">1.限价</div>
<div class="a" style="left:316px;top:675px;width:16px;height:17px;background:linear-gradient(#dbe6fb,#b9cdf3);border:1px solid #b8c8e8"></div><div class="t" style="left:319px;top:676px;font-size:12px;color:#3050a0;font-weight:bold">⌄</div>
<div class="t" style="left:342px;top:677px;font-size:12px">价格</div>
<div class="a" style="left:371px;top:673px;width:65px;height:21px;border:1px solid #a8b8cc;background:#fff"></div><div class="t" style="left:374px;top:676px;font-size:12px;"><b>对手价</b></div>
<div class="t" style="left:444px;top:672px;font-size:8px">▲</div><div class="t" style="left:444px;top:682px;font-size:8px">▼</div>
<div class="t" style="left:245px;top:698px;font-size:12px">涨停<span style="font-family:'Liberation Mono',monospace;font-size:10px">:282.75 </span>跌停<span style="font-family:'Liberation Mono',monospace;font-size:10px">:255.80</span></div>
<div class="a" style="left:415px;top:697px;width:40px;height:15px;border:1px solid #5a6a80;border-radius:3px;background:linear-gradient(#fafafa,#e0e0e0)"></div><div class="t" style="left:421px;top:698px;font-size:12px">查询</div>
<div class="a" style="left:245px;top:724px;width:12px;height:12px;border:1px solid #506080;background:linear-gradient(#e8e8e8,#fff)"></div><div class="t" style="left:263px;top:723px;font-size:12px">确认</div>
<div class="a" style="left:245px;top:741px;width:12px;height:12px;border:1px solid #506080;background:linear-gradient(#e8e8e8,#fff)"></div><div class="t" style="left:263px;top:740px;font-size:12px">保值</div>
<div class="a" style="left:295px;top:716px;width:76px;height:42px;border:1px solid #6a7a90;border-bottom:none;border-radius:3px 3px 0 0;background:#fff"></div><div class="a" style="left:299px;top:743px;width:68px;height:1px;background:#c0c0c0"></div>
<div class="t" style="left:306px;top:724px;font-size:15px;font-weight:bold;color:#d01818;font-family:'Liberation Mono',monospace">274.60</div>
<div class="t" style="left:318px;top:745px;font-size:14px;color:#ff6060;height:11px;overflow:hidden;line-height:20px">买入</div>
<div class="a" style="left:378px;top:716px;width:75px;height:42px;border:1px solid #6a7a90;border-right:none;border-bottom:none;border-radius:3px 0 0 0;background:#fff"></div><div class="a" style="left:382px;top:743px;width:70px;height:1px;background:#c0c0c0"></div>
<div class="t" style="left:389px;top:724px;font-size:15px;font-weight:bold;color:#108010;font-family:'Liberation Mono',monospace">274.50</div>
<div class="t" style="left:401px;top:745px;font-size:14px;color:#40a040;height:11px;overflow:hidden;line-height:20px">卖出</div>
<div class="a" style="left:453px;top:609px;width:15px;height:148px;background:#ececec"></div>
<div class="a" style="left:457px;top:624px;border-left:4px solid transparent;border-right:4px solid transparent;border-bottom:4px solid #333"></div>
<div class="a" style="left:457px;top:744px;border-left:4px solid transparent;border-right:4px solid transparent;border-top:4px solid #333"></div>
<div class="a" style="left:453px;top:629px;width:14px;height:93px;border:1px solid #9a9a9a;border-radius:2px;background:linear-gradient(90deg,#f4f4f4,#d8d8d8)"></div><div class="a" style="left:457px;top:672px;width:6px;height:5px;background:repeating-linear-gradient(#555 0 1px,transparent 1px 2px)"></div>
<div class="a" style="left:234px;top:757px;width:234px;height:15px;background:#ececec"></div>
<div class="a" style="left:240px;top:761px;border-top:4px solid transparent;border-bottom:4px solid transparent;border-right:4px solid #444"></div>
<div class="a" style="left:441px;top:761px;border-top:4px solid transparent;border-bottom:4px solid transparent;border-left:4px solid #444"></div>
<div class="a" style="left:252px;top:758px;width:172px;height:13px;border:1px solid #9a9a9a;border-radius:2px;background:linear-gradient(#f4f4f4,#d8d8d8)"></div><div class="a" style="left:334px;top:762px;width:6px;height:5px;background:repeating-linear-gradient(90deg,#555 0 1px,transparent 1px 2px)"></div>
<svg class="a" style="left:230px;top:776px" width="140" height="22"><path d="M1 0 L10 20 L62 20 L69 0" fill="#fff" stroke="#909090"/><path d="M69 0 L60 20 L126 20 L134 0" fill="#f4f4f4" stroke="#909090"/><path d="M3 0 L68 0" stroke="#fff" stroke-width="2"/></svg>
<div class="t" style="left:244px;top:780px;font-size:12px">普通下单</div>
<div class="t" style="left:305px;top:780px;font-size:12px">闪电下单</div>
<div class="a" style="left:479px;top:606px;width:58px;height:18px;border:1px solid #506080;border-radius:3px;background:linear-gradient(#fdfdfd,#e4e4e4)"></div><div class="t" style="left:483px;top:608px;font-size:12px">快捷平仓</div>
<div class="a" style="left:544px;top:606px;width:58px;height:18px;border:1px solid #506080;border-radius:3px;background:linear-gradient(#fdfdfd,#e4e4e4)"></div><div class="t" style="left:548px;top:608px;font-size:12px">全部平仓</div>
<div class="a" style="left:609px;top:606px;width:78px;height:18px;border:1px solid #506080;border-radius:3px;background:linear-gradient(#fdfdfd,#e4e4e4)"></div><div class="t" style="left:613px;top:608px;font-size:12px">全部账户平仓</div>
<div class="a" style="left:694px;top:606px;width:60px;height:18px;border:1px solid #506080;border-radius:3px;background:linear-gradient(#fdfdfd,#e4e4e4)"></div><div class="t" style="left:698px;top:608px;font-size:12px">快捷反手</div>
<div class="a" style="left:473px;top:628px;width:275px;height:133px;background:#fff;border-left:1px solid #a0a0a0;border-top:1px solid #a0a0a0"></div>
<div class="a" style="left:474px;top:629px;width:274px;height:19px;background:linear-gradient(#f4f4f4,#e8e8e8);border-bottom:1px solid #a0a0a0"></div>
<div class="a" style="left:499px;top:630px;width:1px;height:17px;background:#c8c8c8"></div>
<div class="a" style="left:499px;top:648px;width:1px;height:112px;background:#ececec"></div>
<div class="a" style="left:603px;top:630px;width:1px;height:17px;background:#c8c8c8"></div>
<div class="a" style="left:603px;top:648px;width:1px;height:112px;background:#ececec"></div>
<div class="a" style="left:663px;top:630px;width:1px;height:17px;background:#c8c8c8"></div>
<div class="a" style="left:663px;top:648px;width:1px;height:112px;background:#ececec"></div>
<div class="a" style="left:713px;top:630px;width:1px;height:17px;background:#c8c8c8"></div>
<div class="a" style="left:713px;top:648px;width:1px;height:112px;background:#ececec"></div>
<div class="a" style="left:474px;top:668px;width:274px;height:1px;background:#ececec"></div>
<div class="a" style="left:474px;top:686px;width:274px;height:1px;background:#ececec"></div>
<div class="a" style="left:474px;top:704px;width:274px;height:1px;background:#ececec"></div>
<div class="a" style="left:474px;top:722px;width:274px;height:1px;background:#ececec"></div>
<div class="a" style="left:474px;top:740px;width:274px;height:1px;background:#ececec"></div>
<div class="t" style="left:480px;top:631px;font-size:12px">序..</div><div class="t" style="left:505px;top:631px;font-size:12px">品种</div><div class="t" style="left:609px;top:631px;font-size:12px">均价</div><div class="t" style="left:669px;top:631px;font-size:12px">今持</div><div class="t" style="left:719px;top:631px;font-size:12px">总持</div>
<div class="a" style="left:473px;top:760px;width:275px;height:16px;background:#ececec"></div>
<div class="a" style="left:480px;top:764px;border-top:4px solid transparent;border-bottom:4px solid transparent;border-right:4px solid #444"></div>
<div class="a" style="left:492px;top:761px;width:260px;height:14px;border:1px solid #9a9a9a;border-radius:2px;background:linear-gradient(#f4f4f4,#d8d8d8)"></div><div class="a" style="left:650px;top:765px;width:6px;height:5px;background:repeating-linear-gradient(90deg,#555 0 1px,transparent 1px 2px)"></div>
<div class="a" style="left:473px;top:776px;width:50px;height:21px;background:#fafafa;border:1px solid #d8d8d8;border-top:none"></div><div class="t" style="left:480px;top:780px;font-size:12px">未登录</div>
<!-- BOTTOM TOOLBARS -->
<div class="a" style="left:0;top:799px;width:760px;height:42px;background:#f0f0f0"></div>
<div class="a" style="left:0;top:801px;width:760px;height:18px;background:linear-gradient(#fdfdfd,#f0f0f0 70%,#e0e0e0)"></div>
<div class="a" style="left:0;top:820px;width:760px;height:20px;background:linear-gradient(#fdfdfd,#f0f0f0 70%,#e0e0e0)"></div>
<div class="grip" style="left:4px;top:804px;height:10px"></div><div class="grip" style="left:4px;top:824px;height:10px"></div>
<div class="a" style="left:10px;top:817px;width:48px;height:2px;background:#303030"></div>
<div class="a" style="left:59px;top:802px;width:1px;height:15px;background:#d0d0d0"></div>
<div class="t" style="left:14px;top:803px;font-size:12px">中金所</div>
<div class="a" style="left:60px;top:817px;width:76px;height:2px;background:#303030"></div>
<div class="a" style="left:137px;top:802px;width:1px;height:15px;background:#d0d0d0"></div>
<div class="t" style="left:70px;top:803px;font-size:12px">国内商品</div>
<div class="a" style="left:125px;top:809px;border-left:3px solid transparent;border-right:3px solid transparent;border-top:3px solid #000"></div>
<div class="a" style="left:138px;top:817px;width:76px;height:2px;background:#303030"></div>
<div class="a" style="left:215px;top:802px;width:1px;height:15px;background:#d0d0d0"></div>
<div class="t" style="left:148px;top:803px;font-size:12px">上海证券</div>
<div class="a" style="left:203px;top:809px;border-left:3px solid transparent;border-right:3px solid transparent;border-top:3px solid #000"></div>
<div class="a" style="left:216px;top:817px;width:76px;height:2px;background:#303030"></div>
<div class="a" style="left:293px;top:802px;width:1px;height:15px;background:#d0d0d0"></div>
<div class="t" style="left:226px;top:803px;font-size:12px">深圳证券</div>
<div class="a" style="left:281px;top:809px;border-left:3px solid transparent;border-right:3px solid transparent;border-top:3px solid #000"></div>
<div class="a" style="left:294px;top:817px;width:60px;height:2px;background:#303030"></div>
<div class="a" style="left:355px;top:802px;width:1px;height:15px;background:#d0d0d0"></div>
<div class="t" style="left:301px;top:803px;font-size:12px">A股板块</div>
<div class="a" style="left:356px;top:817px;width:38px;height:2px;background:#303030"></div>
<div class="a" style="left:395px;top:802px;width:1px;height:15px;background:#d0d0d0"></div>
<div class="t" style="left:361px;top:803px;font-size:12px">外汇</div>
<div class="a" style="left:396px;top:817px;width:60px;height:2px;background:#303030"></div>
<div class="a" style="left:457px;top:802px;width:1px;height:15px;background:#d0d0d0"></div>
<div class="t" style="left:403px;top:803px;font-size:12px">伦敦LME</div>
<div class="a" style="left:458px;top:817px;width:70px;height:2px;background:#303030"></div>
<div class="a" style="left:529px;top:802px;width:1px;height:15px;background:#d0d0d0"></div>
<div class="t" style="left:466px;top:803px;font-size:12px">CBOT粮油</div>
<div class="a" style="left:530px;top:817px;width:71px;height:2px;background:#303030"></div>
<div class="a" style="left:602px;top:802px;width:1px;height:15px;background:#d0d0d0"></div>
<div class="t" style="left:538px;top:803px;font-size:12px">NYME能源</div>
<div class="a" style="left:603px;top:817px;width:63px;height:2px;background:#303030"></div>
<div class="a" style="left:667px;top:802px;width:1px;height:15px;background:#d0d0d0"></div>
<div class="t" style="left:611px;top:803px;font-size:12px">日本期货</div>
<div class="a" style="left:668px;top:817px;width:52px;height:2px;background:#303030"></div>
<div class="a" style="left:721px;top:802px;width:1px;height:15px;background:#d0d0d0"></div>
<div class="t" style="left:676px;top:803px;font-size:12px">棕榈油</div>
<div class="a" style="left:722px;top:817px;width:37px;height:2px;background:#303030"></div>
<div class="a" style="left:760px;top:802px;width:1px;height:15px;background:#d0d0d0"></div>
<div class="t" style="left:729px;top:803px;font-size:12px">NYME</div>
<div class="a" style="left:10px;top:838px;width:30px;height:2px;background:#303030"></div>
<div class="a" style="left:40px;top:822px;width:1px;height:16px;background:#d0d0d0"></div>
<div class="t" style="left:14px;top:823px;font-size:12px">MA</div>
<div class="a" style="left:41px;top:838px;width:48px;height:2px;background:#303030"></div>
<div class="a" style="left:89px;top:822px;width:1px;height:16px;background:#d0d0d0"></div>
<div class="t" style="left:48px;top:823px;font-size:12px">MACD</div>
<div class="a" style="left:90px;top:838px;width:42px;height:2px;background:#303030"></div>
<div class="a" style="left:132px;top:822px;width:1px;height:16px;background:#d0d0d0"></div>
<div class="t" style="left:99px;top:823px;font-size:12px">TRIX</div>
<div class="a" style="left:133px;top:838px;width:35px;height:2px;background:#303030"></div>
<div class="a" style="left:168px;top:822px;width:1px;height:16px;background:#d0d0d0"></div>
<div class="t" style="left:140px;top:823px;font-size:12px">W<u>R</u></div>
<div class="a" style="left:169px;top:838px;width:30px;height:2px;background:#303030"></div>
<div class="a" style="left:199px;top:822px;width:1px;height:16px;background:#d0d0d0"></div>
<div class="t" style="left:176px;top:823px;font-size:12px">CR</div>
<div class="a" style="left:200px;top:838px;width:39px;height:2px;background:#303030"></div>
<div class="a" style="left:239px;top:822px;width:1px;height:16px;background:#d0d0d0"></div>
<div class="t" style="left:207px;top:823px;font-size:12px">VOL</div>
<div class="a" style="left:240px;top:838px;width:44px;height:2px;background:#303030"></div>
<div class="a" style="left:284px;top:822px;width:1px;height:16px;background:#d0d0d0"></div>
<div class="t" style="left:247px;top:823px;font-size:12px">BOLL</div>
<div class="a" style="left:285px;top:838px;width:36px;height:2px;background:#303030"></div>
<div class="a" style="left:321px;top:822px;width:1px;height:16px;background:#d0d0d0"></div>
<div class="t" style="left:292px;top:823px;font-size:12px">KDJ</div>
<div class="a" style="left:322px;top:838px;width:34px;height:2px;background:#303030"></div>
<div class="a" style="left:356px;top:822px;width:1px;height:16px;background:#d0d0d0"></div>
<div class="t" style="left:329px;top:823px;font-size:12px">RSI</div>
<div class="a" style="left:357px;top:838px;width:42px;height:2px;background:#303030"></div>
<div class="a" style="left:399px;top:822px;width:1px;height:16px;background:#d0d0d0"></div>
<div class="t" style="left:363px;top:823px;font-size:12px">MTM</div>
<div class="a" style="left:400px;top:838px;width:40px;height:2px;background:#303030"></div>
<div class="a" style="left:440px;top:822px;width:1px;height:16px;background:#d0d0d0"></div>
<div class="t" style="left:408px;top:823px;font-size:12px">OBV</div>
<div class="a" style="left:441px;top:838px;width:38px;height:2px;background:#303030"></div>
<div class="a" style="left:479px;top:822px;width:1px;height:16px;background:#d0d0d0"></div>
<div class="t" style="left:448px;top:823px;font-size:12px">PSY</div>
<div class="a" style="left:480px;top:838px;width:42px;height:2px;background:#303030"></div>
<div class="a" style="left:522px;top:822px;width:1px;height:16px;background:#d0d0d0"></div>
<div class="t" style="left:487px;top:823px;font-size:12px">BIAS</div>
<div class="a" style="left:523px;top:838px;width:38px;height:2px;background:#303030"></div>
<div class="a" style="left:561px;top:822px;width:1px;height:16px;background:#d0d0d0"></div>
<div class="t" style="left:530px;top:823px;font-size:12px">SAR</div>
<div class="a" style="left:562px;top:838px;width:34px;height:2px;background:#303030"></div>
<div class="a" style="left:596px;top:822px;width:1px;height:16px;background:#d0d0d0"></div>
<div class="t" style="left:569px;top:823px;font-size:12px">BBI</div>
<div class="a" style="left:597px;top:838px;width:34px;height:2px;background:#303030"></div>
<div class="a" style="left:631px;top:822px;width:1px;height:16px;background:#d0d0d0"></div>
<div class="t" style="left:604px;top:823px;font-size:12px">CCI</div>
<div class="a" style="left:632px;top:838px;width:31px;height:2px;background:#303030"></div>
<div class="a" style="left:663px;top:822px;width:1px;height:16px;background:#d0d0d0"></div>
<div class="t" style="left:639px;top:823px;font-size:12px">VR</div>
<div class="a" style="left:664px;top:838px;width:38px;height:2px;background:#303030"></div>
<div class="a" style="left:702px;top:822px;width:1px;height:16px;background:#d0d0d0"></div>
<div class="t" style="left:671px;top:823px;font-size:12px">ADL</div>
<div class="a" style="left:703px;top:838px;width:39px;height:2px;background:#303030"></div>
<div class="a" style="left:742px;top:822px;width:1px;height:16px;background:#d0d0d0"></div>
<div class="t" style="left:711px;top:823px;font-size:12px">ADR</div>
<!-- STATUS -->
<div class="a" style="left:0;top:840px;width:760px;height:18px;background:#fbfbfb;border-top:1px solid #e0e0e0"></div>
<div class="t" style="left:8px;top:845px;font-size:13px">沪 <span style="color:#d02020">2085.6 +0.83% (+17.15)</span> 815亿</div>
<div class="a" style="left:213px;top:845px;width:66px;height:8px;background:#f00;border:1px solid #000;border-right:none"></div><div class="a" style="left:279px;top:845px;width:83px;height:8px;background:#108010;border:1px solid #000"></div>
<div class="a" style="left:213px;top:855px;width:150px;height:2px;background:repeating-linear-gradient(90deg,#108010 0 10px,transparent 10px 20px,#e02020 20px 30px,transparent 30px 40px)"></div>
<div class="t" style="left:452px;top:845px;font-size:13px">深 <span style="color:#d02020">8285.7 +1.44% (+117.63)</span> 957亿</div>
<div class="a" style="left:664px;top:845px;width:65px;height:8px;background:#f00;border:1px solid #000;border-right:none"></div><div class="a" style="left:729px;top:845px;width:30px;height:8px;background:#108010;border:1px solid #000"></div>
<div class="a" style="left:664px;top:855px;width:96px;height:2px;background:repeating-linear-gradient(90deg,#108010 0 10px,transparent 10px 20px,#e02020 20px 30px,transparent 30px 40px)"></div>
<!-- TASKBAR -->
<div class="a" style="left:0;top:859px;width:1600px;height:9px;background:linear-gradient(90deg,#94806e,#a08a78 40%,#8e7a68 70%,#7e6a5a);border-top:1px solid #3a3030"></div>
<div class="a" style="left:12px;top:861px;width:30px;height:9px;border-radius:15px 15px 0 0;background:#a8bcd0;border:1px solid #dde"></div>
<div class="a" style="left:60px;top:860px;width:54px;height:8px;border:1px solid rgba(255,255,255,.45);border-bottom:none;border-radius:3px 3px 0 0;background:rgba(255,255,255,.28)"></div>
<div class="a" style="left:119px;top:860px;width:127px;height:8px;border:1px solid rgba(255,255,255,.45);border-bottom:none;border-radius:3px 3px 0 0;background:rgba(255,255,255,.08)"></div>
<div class="a" style="left:246px;top:860px;width:58px;height:8px;border:1px solid rgba(255,255,255,.45);border-bottom:none;border-radius:3px 3px 0 0;background:rgba(255,255,255,.28)"></div>
<div class="a" style="left:304px;top:860px;width:66px;height:8px;border:1px solid rgba(255,255,255,.45);border-bottom:none;border-radius:3px 3px 0 0;background:rgba(255,255,255,.08)"></div>
<div class="a" style="left:370px;top:860px;width:58px;height:8px;border:1px solid rgba(255,255,255,.45);border-bottom:none;border-radius:3px 3px 0 0;background:rgba(255,255,255,.28)"></div>
<div class="a" style="left:80px;top:862px;width:16px;height:7px;border-radius:8px 8px 0 0;border:2px solid #e8c020;border-bottom:none"></div>
<div class="a" style="left:260px;top:862px;width:30px;height:6px;background:#fff;border:1px solid #888"></div>
<div class="a" style="left:336px;top:862px;width:10px;height:6px;border-radius:5px 5px 0 0;background:#222"></div>
<div class="a" style="left:383px;top:862px;width:30px;height:7px;border:2px solid #e00;border-bottom:none;background:#fff"></div>
<!-- DIALOG1 -->
<div class="a" style="left:745px;top:52px;width:859px;height:300px;border:1px solid #4e4e4e;border-radius:6px 6px 0 0;background:linear-gradient(90deg,#efe6da,#f7efe0 15%,#fbf5e2 35%,#f6f0de 45%,#fdf9e8 60%,#fffdf0 85%,#fffff6)"></div>
<div class="a" style="left:746px;top:53px;width:857px;height:28px;background:linear-gradient(90deg,rgba(255,255,255,0) 0%,rgba(255,255,255,0) 60%,rgba(255,255,255,.6) 70%,rgba(255,255,255,0) 80%)"></div>
<svg class="a" style="left:753px;top:59px" width="18" height="18"><path d="M3.5 1.5 L10 1.5 L14.5 6 L14.5 16.5 L3.5 16.5 Z" fill="#fff" stroke="#555"/><path d="M10 1.5 L10 6 L14.5 6" fill="none" stroke="#777"/><path d="M11 9 L7 9 L9.5 11.5 L7 14 L11.5 14" fill="none" stroke="#222" stroke-width="1.1"/><rect x="0.5" y="3.5" width="7" height="7" fill="#fff" stroke="#d01010" stroke-width="1.2"/><path d="M2 9 L6 5" stroke="#e01010" stroke-width="2"/></svg>
<div class="t" style="left:775px;top:60px;font-size:12px;color:#111">交易系统编辑 - (所属公式组 : F.自编)</div>
<div class="a" style="left:1503px;top:53px;width:99px;height:19px;border:1px solid #aaa898;border-top:none;border-radius:0 0 0 5px;background:linear-gradient(#fdfcf4,#f4f1e4)"></div>
<div class="a" style="left:1531px;top:53px;width:1px;height:18px;background:#c8c4b0"></div><div class="a" style="left:1558px;top:53px;width:1px;height:18px;background:#c8c4b0"></div>
<div class="a" style="left:1512px;top:62px;width:12px;height:5px;border:1.5px solid #555;border-radius:1px;background:#eee"></div>
<div class="a" style="left:1539px;top:57px;width:12px;height:10px;border:1.5px solid #555;border-radius:1px;background:#eee"></div><div class="a" style="left:1542px;top:60px;width:6px;height:3px;border:1px solid #555"></div>
<svg class="a" style="left:1577px;top:57px" width="13" height="11"><path d="M1 1 L4 1 L6.5 3.5 L9 1 L12 1 L8.5 5.5 L12 10 L9 10 L6.5 7.5 L4 10 L1 10 L4.5 5.5 Z" fill="#f4f4f4" stroke="#505050" stroke-width="1.1" stroke-linejoin="round"/></svg>
<div class="a" style="left:753px;top:82px;width:847px;height:264px;background:#f0f0f0;border-left:1px solid #8a8a8a;border-top:1px solid #8a8a8a;border-bottom:1px solid #6a6a6a"></div>
<div class="a" style="left:754px;top:83px;width:847px;height:19px;background:linear-gradient(#f6f8fc,#e2e8f3 40%,#d6dfef);border-bottom:1px solid #b8c2d4"></div>
<div class="t" style="left:760px;top:85px;font-size:12px;color:#6a6a6a">文件(F)</div>
<div class="t" style="left:812px;top:85px;font-size:12px;color:#6a6a6a">编辑(E)</div>
<div class="t" style="left:865px;top:85px;font-size:12px;color:#6a6a6a">查看(V)</div>
<div class="t" style="left:918px;top:85px;font-size:12px;color:#6a6a6a">插入(I)</div>
<div class="t" style="left:969px;top:85px;font-size:12px;color:#6a6a6a">调试(D)</div>
<div class="t" style="left:1024px;top:85px;font-size:12px;color:#6a6a6a">帮助(H)</div>
<div class="a" style="left:761px;top:102px;width:636px;height:1px;background:#a0a0a0;border-bottom:1px solid #fff"></div>
<div class="t" style="left:760px;top:111px;font-size:12px">名称<span style="font-family:'Liberation Mono',monospace;font-size:11px;letter-spacing:-1px">(N):</span></div>
<div class="a" style="left:812px;top:108px;width:434px;height:20px;background:#fff;border:2px solid #a0a0a0;border-right:1px solid #e8e8e8;border-bottom:1px solid #e8e8e8;box-shadow:inset 1px 1px 0 #696969"></div>
<div class="t" style="left:815px;top:110px;font-size:12px;font-family:'Liberation Serif',serif;font-size:11px">AF</div>
<div class="t" style="left:1260px;top:111px;font-size:12px">快捷码<span style="font-family:'Liberation Mono',monospace;font-size:11px;letter-spacing:-1px">(Q):</span></div>
<div class="a" style="left:1326px;top:108px;width:74px;height:20px;background:#fff;border:2px solid #a0a0a0;border-right:1px solid #e8e8e8;border-bottom:1px solid #e8e8e8;box-shadow:inset 1px 1px 0 #696969"></div>
<div class="t" style="left:1329px;top:110px;font-family:'Liberation Serif',serif;font-size:11px">AF</div>
<div class="t" style="left:760px;top:136px;font-size:12px">说明<span style="font-family:'Liberation Mono',monospace;font-size:11px;letter-spacing:-1px">(D):</span></div>
<div class="a" style="left:812px;top:134px;width:589px;height:19px;background:#fff;border:2px solid #a0a0a0;border-right:1px solid #e8e8e8;border-bottom:1px solid #e8e8e8;box-shadow:inset 1px 1px 0 #696969"></div>
<div class="a" style="left:761px;top:155px;width:32px;height:20px;background:#efefef;border:1px solid #fff;border-right:2px solid #6a6a6a;border-bottom:2px solid #6a6a6a;box-shadow:inset -1px -1px 0 #a8a8a8,inset 1px 1px 0 #f8f8f8"></div><div class="t" style="left:770px;top:158px;font-size:12px"><span style="font-size:13px">&lt;&lt;</span></div>
<div class="a" style="left:802px;top:161px;width:11px;height:11px;border-radius:50%;border:1px solid #8a8a8a;border-right-color:#fff;border-bottom-color:#fff;background:#fff"></div>
<div class="t" style="left:818px;top:159px;font-size:12px;color:#a0a0a0">副图<span style="font-family:'Liberation Mono',monospace;font-size:11px;letter-spacing:-1px">(U)</span></div>
<div class="a" style="left:868px;top:161px;width:11px;height:11px;border-radius:50%;border:1px solid #b8b8b8;border-right-color:#fff;border-bottom-color:#fff;background:#fff"></div><div class="a" style="left:871px;top:164px;width:4px;height:4px;border-radius:50%;background:#a0a0a0"></div>
<div class="t" style="left:885px;top:159px;font-size:12px;color:#a0a0a0">主图叠加<span style="font-family:'Liberation Mono',monospace;font-size:11px;letter-spacing:-1px">(J)</span></div>
<div class="a" style="left:958px;top:161px;width:11px;height:11px;border-radius:50%;border:1px solid #8a8a8a;border-right-color:#fff;border-bottom-color:#fff;background:#fff"></div>
<div class="t" style="left:975px;top:159px;font-size:12px;color:#a0a0a0">主图<span style="font-family:'Liberation Mono',monospace;font-size:11px;letter-spacing:-1px">(M)</span></div>
<div class="a" style="left:800px;top:177px;width:527px;height:1px;background:#a0a0a0;border-bottom:1px solid #fff"></div>
<div class="a" style="left:1265px;top:160px;width:12px;height:12px;border:1px solid #7a7a7a;border-right-color:#e8e8e8;border-bottom-color:#e8e8e8;background:#fff;box-shadow:inset 1px 1px 0 #404040"></div>
<div class="t" style="left:1283px;top:159px;font-size:12px">加密<span style="font-family:'Liberation Mono',monospace;font-size:11px;letter-spacing:-1px">(Y)</span></div>
<div class="a" style="left:1337px;top:158px;width:64px;height:20px;background:#efefef;border:1px solid #fff;border-right:2px solid #6a6a6a;border-bottom:2px solid #6a6a6a;box-shadow:inset -1px -1px 0 #a8a8a8,inset 1px 1px 0 #f8f8f8"></div><div class="t" style="left:1341px;top:161px;font-size:12px">快速<span style="font-family:'Liberation Mono',monospace;font-size:11px;letter-spacing:-1px">(I)..</span></div>
<div class="t" style="left:761px;top:182px;font-size:12px">运行模式:</div>
<div class="a" style="left:819px;top:183px;width:11px;height:11px;border-radius:50%;border:1px solid #8a8a8a;border-right-color:#fff;border-bottom-color:#fff;background:#fff"></div><div class="a" style="left:822px;top:186px;width:4px;height:4px;border-radius:50%;background:#000"></div>
<div class="t" style="left:836px;top:182px;font-size:12px">序列计算</div>
<div class="a" style="left:891px;top:183px;width:11px;height:11px;border-radius:50%;border:1px solid #8a8a8a;border-right-color:#fff;border-bottom-color:#fff;background:#fff"></div>
<div class="t" style="left:908px;top:182px;font-size:12px">逐K线计算</div>
<div class="a" style="left:969px;top:183px;width:11px;height:11px;border:1px solid #c0c0c0;border-right-color:#fff;border-bottom-color:#fff;background:#f4f4f4"></div>
<div class="t" style="left:986px;top:182px;font-size:12px;color:#a8a8a8">仅刷最后一根K线</div>
<div class="t" style="left:1088px;top:182px;font-size:12px;color:#1060c0;text-decoration:underline">模式说明</div>
<div class="a" style="left:1407px;top:108px;width:95px;height:20px;background:#efefef;border:1px solid #fff;border-right:2px solid #6a6a6a;border-bottom:2px solid #6a6a6a;box-shadow:inset -1px -1px 0 #a8a8a8,inset 1px 1px 0 #f8f8f8"></div><div class="t" style="left:1414px;top:111px;font-size:12px">用法注释<span style="font-family:'Liberation Mono',monospace;font-size:11px;letter-spacing:-1px">(R)..</span></div>
<div class="a" style="left:1506px;top:108px;width:98px;height:20px;background:#efefef;border:1px solid #fff;border-right:2px solid #6a6a6a;border-bottom:2px solid #6a6a6a;box-shadow:inset -1px -1px 0 #a8a8a8,inset 1px 1px 0 #f8f8f8"></div><div class="t" style="left:1532px;top:111px;font-size:12px">确定<span style="font-family:'Liberation Mono',monospace;font-size:11px;letter-spacing:-1px">(K)</span></div>
<div class="a" style="left:1407px;top:132px;width:95px;height:20px;background:#efefef;border:1px solid #fff;border-right:2px solid #6a6a6a;border-bottom:2px solid #6a6a6a;box-shadow:inset -1px -1px 0 #a8a8a8,inset 1px 1px 0 #f8f8f8"></div><div class="t" style="left:1414px;top:135px;font-size:12px">禁用周期<span style="font-family:'Liberation Mono',monospace;font-size:11px;letter-spacing:-1px">(P)..</span></div>
<div class="a" style="left:1506px;top:132px;width:98px;height:20px;background:#efefef;border:1px solid #fff;border-right:2px solid #6a6a6a;border-bottom:2px solid #6a6a6a;box-shadow:inset -1px -1px 0 #a8a8a8,inset 1px 1px 0 #f8f8f8"></div><div class="t" style="left:1514px;top:135px;font-size:12px">引入公式<span style="font-family:'Liberation Mono',monospace;font-size:11px;letter-spacing:-1px">(O)..</span></div>
<div class="a" style="left:1407px;top:156px;width:95px;height:20px;background:#efefef;border:1px solid #fff;border-right:2px solid #6a6a6a;border-bottom:2px solid #6a6a6a;box-shadow:inset -1px -1px 0 #a8a8a8,inset 1px 1px 0 #f8f8f8"></div><div class="t" style="left:1414px;top:159px;font-size:12px">公式测评<span style="font-family:'Liberation Mono',monospace;font-size:11px;letter-spacing:-1px">(E)..</span></div>
<div class="a" style="left:1506px;top:156px;width:98px;height:20px;background:#efefef;border:1px solid #fff;border-right:2px solid #6a6a6a;border-bottom:2px solid #6a6a6a;box-shadow:inset -1px -1px 0 #a8a8a8,inset 1px 1px 0 #f8f8f8"></div><div class="t" style="left:1514px;top:159px;font-size:12px">费率设置<span style="font-family:'Liberation Mono',monospace;font-size:11px;letter-spacing:-1px">(B)..</span></div>
<div class="a" style="left:1407px;top:181px;width:95px;height:20px;background:#efefef;border:1px solid #fff;border-right:2px solid #6a6a6a;border-bottom:2px solid #6a6a6a;box-shadow:inset -1px -1px 0 #a8a8a8,inset 1px 1px 0 #f8f8f8"></div><div class="t" style="left:1421px;top:184px;font-size:12px">应用于图<span style="font-family:'Liberation Mono',monospace;font-size:11px;letter-spacing:-1px">(A)</span></div>
<div class="a" style="left:1506px;top:181px;width:98px;height:20px;background:#efefef;border:1px solid #fff;border-right:2px solid #6a6a6a;border-bottom:2px solid #6a6a6a;box-shadow:inset -1px -1px 0 #a8a8a8,inset 1px 1px 0 #f8f8f8"></div><div class="t" style="left:1514px;top:184px;font-size:12px">编译公式<span style="font-family:'Liberation Mono',monospace;font-size:11px;letter-spacing:-1px">(F)..</span></div>
<div class="a" style="left:761px;top:204px;width:513px;height:98px;border:2px solid #a0a0a0;border-right:1px solid #fff;border-bottom:1px solid #fff;background:#fff;box-shadow:inset 1px 1px 0 #696969"></div>
<div class="a" style="left:763px;top:206px;width:494px;height:16px;background:#f0f0f0;border-bottom:2px solid #808080"></div>
<div class="a" style="left:763px;top:206px;width:60px;height:14px;border-right:2px solid #808080;box-shadow:inset 1px 1px 0 #fff"></div>
<div class="t" style="left:775px;top:207px;font-size:12px;line-height:13px">参数名</div>
<div class="a" style="left:822px;top:222px;width:1px;height:66px;background:#c8c8c8"></div>
<div class="a" style="left:823px;top:206px;width:49px;height:14px;border-right:2px solid #808080;box-shadow:inset 1px 1px 0 #fff"></div>
<div class="t" style="left:835px;top:207px;font-size:12px;line-height:13px">缺省</div>
<div class="a" style="left:871px;top:222px;width:1px;height:66px;background:#c8c8c8"></div>
<div class="a" style="left:872px;top:206px;width:49px;height:14px;border-right:2px solid #808080;box-shadow:inset 1px 1px 0 #fff"></div>
<div class="t" style="left:884px;top:207px;font-size:12px;line-height:13px">最小</div>
<div class="a" style="left:920px;top:222px;width:1px;height:66px;background:#c8c8c8"></div>
<div class="a" style="left:921px;top:206px;width:51px;height:14px;border-right:2px solid #808080;box-shadow:inset 1px 1px 0 #fff"></div>
<div class="t" style="left:934px;top:207px;font-size:12px;line-height:13px">最大</div>
<div class="a" style="left:971px;top:222px;width:1px;height:66px;background:#c8c8c8"></div>
<div class="a" style="left:972px;top:206px;width:48px;height:14px;border-right:2px solid #808080;box-shadow:inset 1px 1px 0 #fff"></div>
<div class="t" style="left:984px;top:207px;font-size:12px;line-height:13px">步长</div>
<div class="a" style="left:1019px;top:222px;width:1px;height:66px;background:#c8c8c8"></div>
<div class="a" style="left:763px;top:238px;width:494px;height:1px;background:#c8c8c8"></div>
<div class="a" style="left:763px;top:256px;width:494px;height:1px;background:#c8c8c8"></div>
<div class="a" style="left:763px;top:274px;width:494px;height:1px;background:#c8c8c8"></div>
<div class="a" style="left:763px;top:287px;width:494px;height:15px;background:#ececec"></div>
<div class="a" style="left:769px;top:290px;border-top:4px solid transparent;border-bottom:4px solid transparent;border-right:4px solid #999"></div>
<div class="a" style="left:1247px;top:290px;border-top:4px solid transparent;border-bottom:4px solid transparent;border-left:4px solid #999"></div>
<div class="a" style="left:1257px;top:206px;width:16px;height:96px;background:#ececec"></div>
<div class="a" style="left:1261px;top:212px;border-left:4px solid transparent;border-right:4px solid transparent;border-bottom:4px solid #333"></div>
<div class="a" style="left:1261px;top:276px;border-left:4px solid transparent;border-right:4px solid transparent;border-top:4px solid #333"></div>
<div class="a" style="left:1258px;top:223px;width:14px;height:15px;border:1px solid #9a9a9a;border-radius:2px;background:linear-gradient(90deg,#f4f4f4,#d8d8d8)"></div>
<div class="a" style="left:1257px;top:287px;width:16px;height:15px;background:#f0f0f0"></div>
<div class="t" style="left:1283px;top:205px;font-size:12px;color:#c00000">调试信息:</div>
<div class="a" style="left:1279px;top:273px;width:266px;height:25px;border:1px solid #fff;border-right:2px solid #808080;border-bottom:2px solid #808080;background:#f0f0f0"></div>
<div class="a" style="left:1279px;top:254px;width:50px;height:21px;background:#f0f0f0;border-top:1px solid #fff;border-left:1px solid #fff;border-right:2px solid #808080;"></div>
<div class="t" style="left:1284px;top:257px;font-size:12px">开多</div>
<div class="a" style="left:1329px;top:256px;width:46px;height:17px;background:#f0f0f0;border-top:1px solid #fff;border-left:1px solid #fff;border-right:2px solid #808080;"></div>
<div class="t" style="left:1334px;top:259px;font-size:12px">平多</div>
<div class="a" style="left:1375px;top:256px;width:48px;height:17px;background:#f0f0f0;border-top:1px solid #fff;border-left:1px solid #fff;border-right:2px solid #808080;"></div>
<div class="t" style="left:1380px;top:259px;font-size:12px">开空</div>
<div class="a" style="left:1423px;top:256px;width:48px;height:17px;background:#f0f0f0;border-top:1px solid #fff;border-left:1px solid #fff;border-right:2px solid #808080;"></div>
<div class="t" style="left:1428px;top:259px;font-size:12px">平空</div>
<div class="t" style="left:1427px;top:278px;font-size:12px">颜色<span style="font-family:'Liberation Mono',monospace;font-size:11px;letter-spacing:-1px">(T):</span></div>
<div class="a" style="left:1478px;top:277px;width:57px;height:16px;border:1px solid #3a80d0;background:#fff"></div>
<div class="a" style="left:1480px;top:279px;width:37px;height:11px;background:#f00;border:1px solid #800"></div>
<div class="a" style="left:1520px;top:278px;width:14px;height:14px;border:1px solid #808080;background:linear-gradient(#f8f8f8,#d8d8d8)"></div>
<div class="a" style="left:1523px;top:284px;border-left:4px solid transparent;border-right:4px solid transparent;border-top:4px solid #000"></div>
<div class="a" style="left:762px;top:308px;width:836px;height:38px;border:1px solid #a0a0a0;background:#fff;overflow:hidden"><div class="a" style="left:0;top:0;width:21px;height:100%;background:#e4e4e4"></div><div class="t" style="left:20px;top:1px;font-family:'Liberation Mono',monospace;font-size:12.2px;letter-spacing:-0.47px;line-height:14px;color:#000">AAA:<span style="color:#0000b0">STKINDI</span>(<span style="color:#c000c0">'AU12'</span>,<span style="color:#c000c0">'B.b'</span>,0,1,0),<span style="color:#0000b0">COLORYELLOW</span>,<span style="color:#0000b0">NOAXIS</span>;</div></div>
<div class="a" style="left:1582px;top:309px;width:15px;height:36px;background:#ececec"></div>
<div class="a" style="left:1586px;top:314px;border-left:4px solid transparent;border-right:4px solid transparent;border-bottom:4px solid #333"></div>
<!-- DIALOG2 -->
<div class="a" style="left:748px;top:330px;width:856px;height:525px;border:1px solid #4e4e4e;border-radius:6px 6px 0 0;background:linear-gradient(90deg,#efe6da,#f7efe0 15%,#fbf5e2 35%,#f6f0de 45%,#fdf9e8 60%,#fffdf0 85%,#fffff6)"></div>
<div class="a" style="left:749px;top:331px;width:854px;height:28px;background:linear-gradient(90deg,rgba(255,255,255,0) 0%,rgba(255,255,255,0) 60%,rgba(255,255,255,.6) 70%,rgba(255,255,255,0) 80%)"></div>
<svg class="a" style="left:758px;top:337px" width="18" height="18"><path d="M3.5 1.5 L10 1.5 L14.5 6 L14.5 16.5 L3.5 16.5 Z" fill="#fff" stroke="#555"/><path d="M10 1.5 L10 6 L14.5 6" fill="none" stroke="#777"/><path d="M11 9 L7 9 L9.5 11.5 L7 14 L11.5 14" fill="none" stroke="#222" stroke-width="1.1"/><rect x="0.5" y="3.5" width="7" height="7" fill="#fff" stroke="#d01010" stroke-width="1.2"/><path d="M2 9 L6 5" stroke="#e01010" stroke-width="2"/></svg>
<div class="t" style="left:778px;top:338px;font-size:12px;color:#111">交易系统编辑 - (所属公式组 : F.自编)</div>
<div class="a" style="left:1506px;top:331px;width:96px;height:19px;border:1px solid #aaa898;border-top:none;border-radius:0 0 0 5px;background:linear-gradient(#fdfcf4,#f4f1e4)"></div>
<div class="a" style="left:1534px;top:331px;width:1px;height:18px;background:#c8c4b0"></div><div class="a" style="left:1561px;top:331px;width:1px;height:18px;background:#c8c4b0"></div>
<div class="a" style="left:1515px;top:340px;width:12px;height:5px;border:1.5px solid #555;border-radius:1px;background:#eee"></div>
<div class="a" style="left:1542px;top:335px;width:12px;height:10px;border:1.5px solid #555;border-radius:1px;background:#eee"></div><div class="a" style="left:1545px;top:338px;width:6px;height:3px;border:1px solid #555"></div>
<svg class="a" style="left:1580px;top:335px" width="13" height="11"><path d="M1 1 L4 1 L6.5 3.5 L9 1 L12 1 L8.5 5.5 L12 10 L9 10 L6.5 7.5 L4 10 L1 10 L4.5 5.5 Z" fill="#f4f4f4" stroke="#505050" stroke-width="1.1" stroke-linejoin="round"/></svg>
<div class="a" style="left:756px;top:360px;width:844px;height:489px;background:#f0f0f0;border-left:1px solid #8a8a8a;border-top:1px solid #8a8a8a;border-bottom:1px solid #6a6a6a"></div>
<div class="a" style="left:757px;top:361px;width:844px;height:19px;background:linear-gradient(#f6f8fc,#e2e8f3 40%,#d6dfef);border-bottom:1px solid #b8c2d4"></div>
<div class="t" style="left:762px;top:363px;font-size:12px;color:#6a6a6a">文件(F)</div>
<div class="t" style="left:814px;top:363px;font-size:12px;color:#6a6a6a">编辑(E)</div>
<div class="t" style="left:867px;top:363px;font-size:12px;color:#6a6a6a">查看(V)</div>
<div class="t" style="left:920px;top:363px;font-size:12px;color:#6a6a6a">插入(I)</div>
<div class="t" style="left:971px;top:363px;font-size:12px;color:#6a6a6a">调试(D)</div>
<div class="t" style="left:1026px;top:363px;font-size:12px;color:#6a6a6a">帮助(H)</div>
<div class="a" style="left:763px;top:380px;width:636px;height:1px;background:#a0a0a0;border-bottom:1px solid #fff"></div>
<div class="t" style="left:762px;top:389px;font-size:12px">名称<span style="font-family:'Liberation Mono',monospace;font-size:11px;letter-spacing:-1px">(N):</span></div>
<div class="a" style="left:814px;top:386px;width:434px;height:20px;background:#fff;border:2px solid #a0a0a0;border-right:1px solid #e8e8e8;border-bottom:1px solid #e8e8e8;box-shadow:inset 1px 1px 0 #696969"></div>
<div class="t" style="left:817px;top:388px;font-size:12px;font-family:'Liberation Serif',serif;font-size:11px">B</div>
<div class="t" style="left:1262px;top:389px;font-size:12px">快捷码<span style="font-family:'Liberation Mono',monospace;font-size:11px;letter-spacing:-1px">(Q):</span></div>
<div class="a" style="left:1328px;top:386px;width:74px;height:20px;background:#fff;border:2px solid #a0a0a0;border-right:1px solid #e8e8e8;border-bottom:1px solid #e8e8e8;box-shadow:inset 1px 1px 0 #696969"></div>
<div class="t" style="left:1331px;top:388px;font-family:'Liberation Serif',serif;font-size:11px">B</div>
<div class="t" style="left:762px;top:414px;font-size:12px">说明<span style="font-family:'Liberation Mono',monospace;font-size:11px;letter-spacing:-1px">(D):</span></div>
<div class="a" style="left:814px;top:412px;width:589px;height:19px;background:#fff;border:2px solid #a0a0a0;border-right:1px solid #e8e8e8;border-bottom:1px solid #e8e8e8;box-shadow:inset 1px 1px 0 #696969"></div>
<div class="a" style="left:763px;top:433px;width:32px;height:20px;background:#efefef;border:1px solid #fff;border-right:2px solid #6a6a6a;border-bottom:2px solid #6a6a6a;box-shadow:inset -1px -1px 0 #a8a8a8,inset 1px 1px 0 #f8f8f8"></div><div class="t" style="left:772px;top:436px;font-size:12px"><span style="font-size:13px">&lt;&lt;</span></div>
<div class="a" style="left:804px;top:439px;width:11px;height:11px;border-radius:50%;border:1px solid #8a8a8a;border-right-color:#fff;border-bottom-color:#fff;background:#fff"></div>
<div class="t" style="left:820px;top:437px;font-size:12px;color:#a0a0a0">副图<span style="font-family:'Liberation Mono',monospace;font-size:11px;letter-spacing:-1px">(U)</span></div>
<div class="a" style="left:870px;top:439px;width:11px;height:11px;border-radius:50%;border:1px solid #b8b8b8;border-right-color:#fff;border-bottom-color:#fff;background:#fff"></div><div class="a" style="left:873px;top:442px;width:4px;height:4px;border-radius:50%;background:#a0a0a0"></div>
<div class="t" style="left:887px;top:437px;font-size:12px;color:#a0a0a0">主图叠加<span style="font-family:'Liberation Mono',monospace;font-size:11px;letter-spacing:-1px">(J)</span></div>
<div class="a" style="left:960px;top:439px;width:11px;height:11px;border-radius:50%;border:1px solid #8a8a8a;border-right-color:#fff;border-bottom-color:#fff;background:#fff"></div>
<div class="t" style="left:977px;top:437px;font-size:12px;color:#a0a0a0">主图<span style="font-family:'Liberation Mono',monospace;font-size:11px;letter-spacing:-1px">(M)</span></div>
<div class="a" style="left:802px;top:455px;width:527px;height:1px;background:#a0a0a0;border-bottom:1px solid #fff"></div>
<div class="a" style="left:1267px;top:438px;width:12px;height:12px;border:1px solid #7a7a7a;border-right-color:#e8e8e8;border-bottom-color:#e8e8e8;background:#fff;box-shadow:inset 1px 1px 0 #404040"></div>
<div class="t" style="left:1285px;top:437px;font-size:12px">加密<span style="font-family:'Liberation Mono',monospace;font-size:11px;letter-spacing:-1px">(Y)</span></div>
<div class="a" style="left:1339px;top:436px;width:64px;height:20px;background:#efefef;border:1px solid #fff;border-right:2px solid #6a6a6a;border-bottom:2px solid #6a6a6a;box-shadow:inset -1px -1px 0 #a8a8a8,inset 1px 1px 0 #f8f8f8"></div><div class="t" style="left:1343px;top:439px;font-size:12px">快速<span style="font-family:'Liberation Mono',monospace;font-size:11px;letter-spacing:-1px">(I)..</span></div>
<div class="t" style="left:763px;top:460px;font-size:12px">运行模式:</div>
<div class="a" style="left:821px;top:461px;width:11px;height:11px;border-radius:50%;border:1px solid #8a8a8a;border-right-color:#fff;border-bottom-color:#fff;background:#fff"></div><div class="a" style="left:824px;top:464px;width:4px;height:4px;border-radius:50%;background:#000"></div>
<div class="t" style="left:838px;top:460px;font-size:12px">序列计算</div>
<div class="a" style="left:893px;top:461px;width:11px;height:11px;border-radius:50%;border:1px solid #8a8a8a;border-right-color:#fff;border-bottom-color:#fff;background:#fff"></div>
<div class="t" style="left:910px;top:460px;font-size:12px">逐K线计算</div>
<div class="a" style="left:971px;top:461px;width:11px;height:11px;border:1px solid #c0c0c0;border-right-color:#fff;border-bottom-color:#fff;background:#f4f4f4"></div>
<div class="t" style="left:988px;top:460px;font-size:12px;color:#a8a8a8">仅刷最后一根K线</div>
<div class="t" style="left:1090px;top:460px;font-size:12px;color:#1060c0;text-decoration:underline">模式说明</div>
<div class="a" style="left:1409px;top:386px;width:95px;height:20px;background:#efefef;border:1px solid #fff;border-right:2px solid #6a6a6a;border-bottom:2px solid #6a6a6a;box-shadow:inset -1px -1px 0 #a8a8a8,inset 1px 1px 0 #f8f8f8"></div><div class="t" style="left:1416px;top:389px;font-size:12px">用法注释<span style="font-family:'Liberation Mono',monospace;font-size:11px;letter-spacing:-1px">(R)..</span></div>
<div class="a" style="left:1508px;top:386px;width:98px;height:20px;background:#efefef;border:1px solid #fff;border-right:2px solid #6a6a6a;border-bottom:2px solid #6a6a6a;box-shadow:inset -1px -1px 0 #a8a8a8,inset 1px 1px 0 #f8f8f8"></div><div class="t" style="left:1534px;top:389px;font-size:12px">确定<span style="font-family:'Liberation Mono',monospace;font-size:11px;letter-spacing:-1px">(K)</span></div>
<div class="a" style="left:1409px;top:410px;width:95px;height:20px;background:#efefef;border:1px solid #fff;border-right:2px solid #6a6a6a;border-bottom:2px solid #6a6a6a;box-shadow:inset -1px -1px 0 #a8a8a8,inset 1px 1px 0 #f8f8f8"></div><div class="t" style="left:1416px;top:413px;font-size:12px">禁用周期<span style="font-family:'Liberation Mono',monospace;font-size:11px;letter-spacing:-1px">(P)..</span></div>
<div class="a" style="left:1508px;top:410px;width:98px;height:20px;background:#efefef;border:1px solid #fff;border-right:2px solid #6a6a6a;border-bottom:2px solid #6a6a6a;box-shadow:inset -1px -1px 0 #a8a8a8,inset 1px 1px 0 #f8f8f8"></div><div class="t" style="left:1516px;top:413px;font-size:12px">引入公式<span style="font-family:'Liberation Mono',monospace;font-size:11px;letter-spacing:-1px">(O)..</span></div>
<div class="a" style="left:1409px;top:434px;width:95px;height:20px;background:#efefef;border:1px solid #fff;border-right:2px solid #6a6a6a;border-bottom:2px solid #6a6a6a;box-shadow:inset -1px -1px 0 #a8a8a8,inset 1px 1px 0 #f8f8f8"></div><div class="t" style="left:1416px;top:437px;font-size:12px">公式测评<span style="font-family:'Liberation Mono',monospace;font-size:11px;letter-spacing:-1px">(E)..</span></div>
<div class="a" style="left:1508px;top:434px;width:98px;height:20px;background:#efefef;border:1px solid #fff;border-right:2px solid #6a6a6a;border-bottom:2px solid #6a6a6a;box-shadow:inset -1px -1px 0 #a8a8a8,inset 1px 1px 0 #f8f8f8"></div><div class="t" style="left:1516px;top:437px;font-size:12px">费率设置<span style="font-family:'Liberation Mono',monospace;font-size:11px;letter-spacing:-1px">(B)..</span></div>
<div class="a" style="left:1409px;top:459px;width:95px;height:20px;background:#efefef;border:1px solid #fff;border-right:2px solid #6a6a6a;border-bottom:2px solid #6a6a6a;box-shadow:inset -1px -1px 0 #a8a8a8,inset 1px 1px 0 #f8f8f8"></div><div class="t" style="left:1423px;top:462px;font-size:12px">应用于图<span style="font-family:'Liberation Mono',monospace;font-size:11px;letter-spacing:-1px">(A)</span></div>
<div class="a" style="left:1508px;top:459px;width:98px;height:20px;background:#efefef;border:1px solid #fff;border-right:2px solid #6a6a6a;border-bottom:2px solid #6a6a6a;box-shadow:inset -1px -1px 0 #a8a8a8,inset 1px 1px 0 #f8f8f8"></div><div class="t" style="left:1516px;top:462px;font-size:12px">编译公式<span style="font-family:'Liberation Mono',monospace;font-size:11px;letter-spacing:-1px">(F)..</span></div>
<div class="a" style="left:763px;top:482px;width:513px;height:98px;border:2px solid #a0a0a0;border-right:1px solid #fff;border-bottom:1px solid #fff;background:#fff;box-shadow:inset 1px 1px 0 #696969"></div>
<div class="a" style="left:765px;top:484px;width:494px;height:16px;background:#f0f0f0;border-bottom:2px solid #808080"></div>
<div class="a" style="left:765px;top:484px;width:60px;height:14px;border-right:2px solid #808080;box-shadow:inset 1px 1px 0 #fff"></div>
<div class="t" style="left:777px;top:485px;font-size:12px;line-height:13px">参数名</div>
<div class="a" style="left:824px;top:500px;width:1px;height:66px;background:#c8c8c8"></div>
<div class="a" style="left:825px;top:484px;width:49px;height:14px;border-right:2px solid #808080;box-shadow:inset 1px 1px 0 #fff"></div>
<div class="t" style="left:837px;top:485px;font-size:12px;line-height:13px">缺省</div>
<div class="a" style="left:873px;top:500px;width:1px;height:66px;background:#c8c8c8"></div>
<div class="a" style="left:874px;top:484px;width:49px;height:14px;border-right:2px solid #808080;box-shadow:inset 1px 1px 0 #fff"></div>
<div class="t" style="left:886px;top:485px;font-size:12px;line-height:13px">最小</div>
<div class="a" style="left:922px;top:500px;width:1px;height:66px;background:#c8c8c8"></div>
<div class="a" style="left:923px;top:484px;width:51px;height:14px;border-right:2px solid #808080;box-shadow:inset 1px 1px 0 #fff"></div>
<div class="t" style="left:936px;top:485px;font-size:12px;line-height:13px">最大</div>
<div class="a" style="left:973px;top:500px;width:1px;height:66px;background:#c8c8c8"></div>
<div class="a" style="left:974px;top:484px;width:48px;height:14px;border-right:2px solid #808080;box-shadow:inset 1px 1px 0 #fff"></div>
<div class="t" style="left:986px;top:485px;font-size:12px;line-height:13px">步长</div>
<div class="a" style="left:1021px;top:500px;width:1px;height:66px;background:#c8c8c8"></div>
<div class="a" style="left:765px;top:516px;width:494px;height:1px;background:#c8c8c8"></div>
<div class="a" style="left:765px;top:534px;width:494px;height:1px;background:#c8c8c8"></div>
<div class="a" style="left:765px;top:552px;width:494px;height:1px;background:#c8c8c8"></div>
<div class="a" style="left:765px;top:565px;width:494px;height:15px;background:#ececec"></div>
<div class="a" style="left:771px;top:568px;border-top:4px solid transparent;border-bottom:4px solid transparent;border-right:4px solid #999"></div>
<div class="a" style="left:1249px;top:568px;border-top:4px solid transparent;border-bottom:4px solid transparent;border-left:4px solid #999"></div>
<div class="a" style="left:1259px;top:484px;width:16px;height:96px;background:#ececec"></div>
<div class="a" style="left:1263px;top:490px;border-left:4px solid transparent;border-right:4px solid transparent;border-bottom:4px solid #333"></div>
<div class="a" style="left:1263px;top:554px;border-left:4px solid transparent;border-right:4px solid transparent;border-top:4px solid #333"></div>
<div class="a" style="left:1260px;top:501px;width:14px;height:15px;border:1px solid #9a9a9a;border-radius:2px;background:linear-gradient(90deg,#f4f4f4,#d8d8d8)"></div>
<div class="a" style="left:1259px;top:565px;width:16px;height:15px;background:#f0f0f0"></div>
<div class="t" style="left:1285px;top:483px;font-size:12px;color:#c00000">调试信息:</div>
<div class="a" style="left:1281px;top:551px;width:266px;height:25px;border:1px solid #fff;border-right:2px solid #808080;border-bottom:2px solid #808080;background:#f0f0f0"></div>
<div class="a" style="left:1281px;top:532px;width:50px;height:21px;background:#f0f0f0;border-top:1px solid #fff;border-left:1px solid #fff;border-right:2px solid #808080;"></div>
<div class="t" style="left:1286px;top:535px;font-size:12px">开多</div>
<div class="a" style="left:1331px;top:534px;width:46px;height:17px;background:#f0f0f0;border-top:1px solid #fff;border-left:1px solid #fff;border-right:2px solid #808080;"></div>
<div class="t" style="left:1336px;top:537px;font-size:12px">平多</div>
<div class="a" style="left:1377px;top:534px;width:48px;height:17px;background:#f0f0f0;border-top:1px solid #fff;border-left:1px solid #fff;border-right:2px solid #808080;"></div>
<div class="t" style="left:1382px;top:537px;font-size:12px">开空</div>
<div class="a" style="left:1425px;top:534px;width:48px;height:17px;background:#f0f0f0;border-top:1px solid #fff;border-left:1px solid #fff;border-right:2px solid #808080;"></div>
<div class="t" style="left:1430px;top:537px;font-size:12px">平空</div>
<div class="t" style="left:1429px;top:556px;font-size:12px">颜色<span style="font-family:'Liberation Mono',monospace;font-size:11px;letter-spacing:-1px">(T):</span></div>
<div class="a" style="left:1480px;top:555px;width:57px;height:16px;border:1px solid #3a80d0;background:#fff"></div>
<div class="a" style="left:1482px;top:557px;width:37px;height:11px;background:#f00;border:1px solid #800"></div>
<div class="a" style="left:1522px;top:556px;width:14px;height:14px;border:1px solid #808080;background:linear-gradient(#f8f8f8,#d8d8d8)"></div>
<div class="a" style="left:1525px;top:562px;border-left:4px solid transparent;border-right:4px solid transparent;border-top:4px solid #000"></div>
<div class="a" style="left:764px;top:586px;width:834px;height:239px;border:1px solid #a0a0a0;background:#fff;overflow:hidden"><div class="a" style="left:0;top:0;width:21px;height:100%;background:#e4e4e4"></div><div class="t" style="left:20px;top:17px;font-family:'Liberation Mono',monospace;font-size:12.4px;letter-spacing:-0.44px"><span style="color:#000">b:</span><span style="color:#0000b0">close</span>,<span style="color:#0000b0">NOAXIS</span>;</div><div class="t" style="left:20px;top:32px;font-family:'Liberation Mono',monospace;font-size:12.4px;letter-spacing:-0.44px"><span style="color:#0c760c">{</span></div><div class="t" style="left:20px;top:47px;font-family:'Liberation Mono',monospace;font-size:12.4px;letter-spacing:-0.44px"><span style="color:#0c760c">KD:=;</span></div><div class="t" style="left:127px;top:47px;font-family:'Liberation Mono',monospace;font-size:12.4px;letter-spacing:-0.44px;color:#0c760c">//<span style="font-size:13.8px;letter-spacing:0px;font-family:'Liberation Sans',sans-serif">开多条件</span></div><div class="t" style="left:20px;top:62px;font-family:'Liberation Mono',monospace;font-size:12.4px;letter-spacing:-0.44px"><span style="color:#0c760c">PD:=;</span></div><div class="t" style="left:127px;top:62px;font-family:'Liberation Mono',monospace;font-size:12.4px;letter-spacing:-0.44px;color:#0c760c">//<span style="font-size:13.8px;letter-spacing:0px;font-family:'Liberation Sans',sans-serif">平多条件</span></div><div class="t" style="left:20px;top:77px;font-family:'Liberation Mono',monospace;font-size:12.4px;letter-spacing:-0.44px"><span style="color:#0c760c">KK:=;</span></div><div class="t" style="left:127px;top:77px;font-family:'Liberation Mono',monospace;font-size:12.4px;letter-spacing:-0.44px;color:#0c760c">//<span style="font-size:13.8px;letter-spacing:0px;font-family:'Liberation Sans',sans-serif">开空条件</span></div><div class="t" style="left:20px;top:92px;font-family:'Liberation Mono',monospace;font-size:12.4px;letter-spacing:-0.44px"><span style="color:#0c760c">PK:=;</span></div><div class="t" style="left:127px;top:92px;font-family:'Liberation Mono',monospace;font-size:12.4px;letter-spacing:-0.44px;color:#0c760c">//<span style="font-size:13.8px;letter-spacing:0px;font-family:'Liberation Sans',sans-serif">平空条件</span></div><div class="t" style="left:20px;top:136px;font-family:'Liberation Mono',monospace;font-size:12.4px;letter-spacing:-0.44px"><span style="color:#0c760c"><span style="font-size:13.8px;letter-spacing:0px;font-family:'Liberation Sans',sans-serif">平空</span>:SELLSHORT(PK,1,THISCLOSE);</span></div><div class="t" style="left:364px;top:136px;font-family:'Liberation Mono',monospace;font-size:12.4px;letter-spacing:-0.44px;color:#0c760c">//<span style="font-size:13.8px;letter-spacing:0px;font-family:'Liberation Sans',sans-serif">平空信号</span></div><div class="t" style="left:20px;top:151px;font-family:'Liberation Mono',monospace;font-size:12.4px;letter-spacing:-0.44px"><span style="color:#0c760c"><span style="font-size:13.8px;letter-spacing:0px;font-family:'Liberation Sans',sans-serif">开多</span>:BUY(KD AND HOLDING=0,1,THISCLOSE);</span></div><div class="t" style="left:364px;top:151px;font-family:'Liberation Mono',monospace;font-size:12.4px;letter-spacing:-0.44px;color:#0c760c">//<span style="font-size:13.8px;letter-spacing:0px;font-family:'Liberation Sans',sans-serif">开多信号</span></div><div class="t" style="left:20px;top:166px;font-family:'Liberation Mono',monospace;font-size:12.4px;letter-spacing:-0.44px"><span style="color:#0c760c"><span style="font-size:13.8px;letter-spacing:0px;font-family:'Liberation Sans',sans-serif">平多</span>:SELL(PD,1,THISCLOSE);</span></div><div class="t" style="left:364px;top:166px;font-family:'Liberation Mono',monospace;font-size:12.4px;letter-spacing:-0.44px;color:#0c760c">//<span style="font-size:13.8px;letter-spacing:0px;font-family:'Liberation Sans',sans-serif">平多信号</span></div><div class="t" style="left:20px;top:181px;font-family:'Liberation Mono',monospace;font-size:12.4px;letter-spacing:-0.44px"><span style="color:#0c760c"><span style="font-size:13.8px;letter-spacing:0px;font-family:'Liberation Sans',sans-serif">开空</span>:BUYSHORT(KK AND HOLDING=0,1,THISCLOSE);</span></div><div class="t" style="left:364px;top:181px;font-family:'Liberation Mono',monospace;font-size:12.4px;letter-spacing:-0.44px;color:#0c760c">//<span style="font-size:13.8px;letter-spacing:0px;font-family:'Liberation Sans',sans-serif">开空信号</span></div><div class="t" style="left:20px;top:211px;font-family:'Liberation Mono',monospace;font-size:12.4px;letter-spacing:-0.44px"><span style="color:#0c760c">}</span></div><div class="t" style="left:2px;top:63px;font-family:'Liberation Mono',monospace;font-size:12.4px;letter-spacing:-0.44px;color:#108080">5</div><div class="t" style="left:2px;top:137px;font-family:'Liberation Mono',monospace;font-size:12.4px;letter-spacing:-0.44px;color:#108080">10</div><div class="t" style="left:2px;top:212px;font-family:'Liberation Mono',monospace;font-size:12.4px;letter-spacing:-0.44px;color:#108080">15</div></div>
<div class="a" style="left:1582px;top:587px;width:15px;height:237px;background:#ececec"></div>
<div class="a" style="left:1586px;top:592px;border-left:4px solid transparent;border-right:4px solid transparent;border-bottom:4px solid #333"></div>
<div class="a" style="left:1586px;top:797px;border-left:4px solid transparent;border-right:4px solid transparent;border-top:4px solid #333"></div>
<div class="a" style="left:1583px;top:604px;width:14px;height:98px;border:1px solid #9a9a9a;border-radius:2px;background:linear-gradient(90deg,#f4f4f4,#d0d0d0)"></div><div class="a" style="left:1587px;top:650px;width:6px;height:5px;background:repeating-linear-gradient(#555 0 1px,transparent 1px 2px)"></div>
<div class="a" style="left:765px;top:809px;width:817px;height:15px;background:#ececec"></div>
<div class="a" style="left:771px;top:812px;border-top:4px solid transparent;border-bottom:4px solid transparent;border-right:4px solid #333"></div>
<div class="a" style="left:1572px;top:812px;border-top:4px solid transparent;border-bottom:4px solid transparent;border-left:4px solid #333"></div>
<div class="a" style="left:783px;top:809px;width:18px;height:14px;border:1px solid #9a9a9a;border-radius:2px;background:linear-gradient(#f4f4f4,#d0d0d0)"></div><div class="a" style="left:789px;top:813px;width:6px;height:5px;background:repeating-linear-gradient(90deg,#555 0 1px,transparent 1px 2px)"></div>
<div class="a" style="left:749px;top:848px;width:851px;height:6px;background:linear-gradient(90deg,rgba(60,140,40,.55),rgba(120,170,90,.35) 6%,rgba(255,255,240,0) 10%,rgba(255,255,240,0) 16%,rgba(150,140,130,.35) 19%,rgba(255,255,255,0) 22%,rgba(240,150,140,.3) 28%,rgba(240,170,160,.25) 45%,rgba(240,180,170,.0) 50%,rgba(180,170,150,.25) 70%,rgba(200,190,160,.3) 80%,rgba(230,190,180,.3) 95%)"></div>
<div class="t" style="left:769px;top:833px;font-size:12px;color:#1a5ab8;text-decoration:underline">公式系统常见问题汇总</div>
<div class="t" style="left:937px;top:833px;font-size:12px;color:#1a5ab8;text-decoration:underline">公式模型编写客服中心</div>
<div class="t" style="left:1088px;top:833px;font-size:12px;color:#1a5ab8;text-decoration:underline">公式模型编写调试教程</div>
<!-- ELLIPSES -->
<svg class="a" style="left:0;top:0;pointer-events:none" width="1600" height="868">
<ellipse cx="302.5" cy="176.5" rx="65" ry="37.5" fill="none" stroke="#c01818" stroke-width="1.1"/>
<ellipse cx="83" cy="368" rx="45" ry="20" fill="none" stroke="#c01818" stroke-width="1.1"/>
<ellipse cx="827" cy="119.5" rx="29.6" ry="19.7" fill="none" stroke="#c01818" stroke-width="1.1"/>
<ellipse cx="964.6" cy="313" rx="209.4" ry="32.5" fill="none" stroke="#c01818" stroke-width="1.1"/>
<ellipse cx="836.5" cy="397.8" rx="45.5" ry="21.2" fill="none" stroke="#c01818" stroke-width="1.1"/>
<ellipse cx="845.7" cy="611.2" rx="75.8" ry="25.2" fill="none" stroke="#c01818" stroke-width="1.1"/>
</svg>
</body></html>
